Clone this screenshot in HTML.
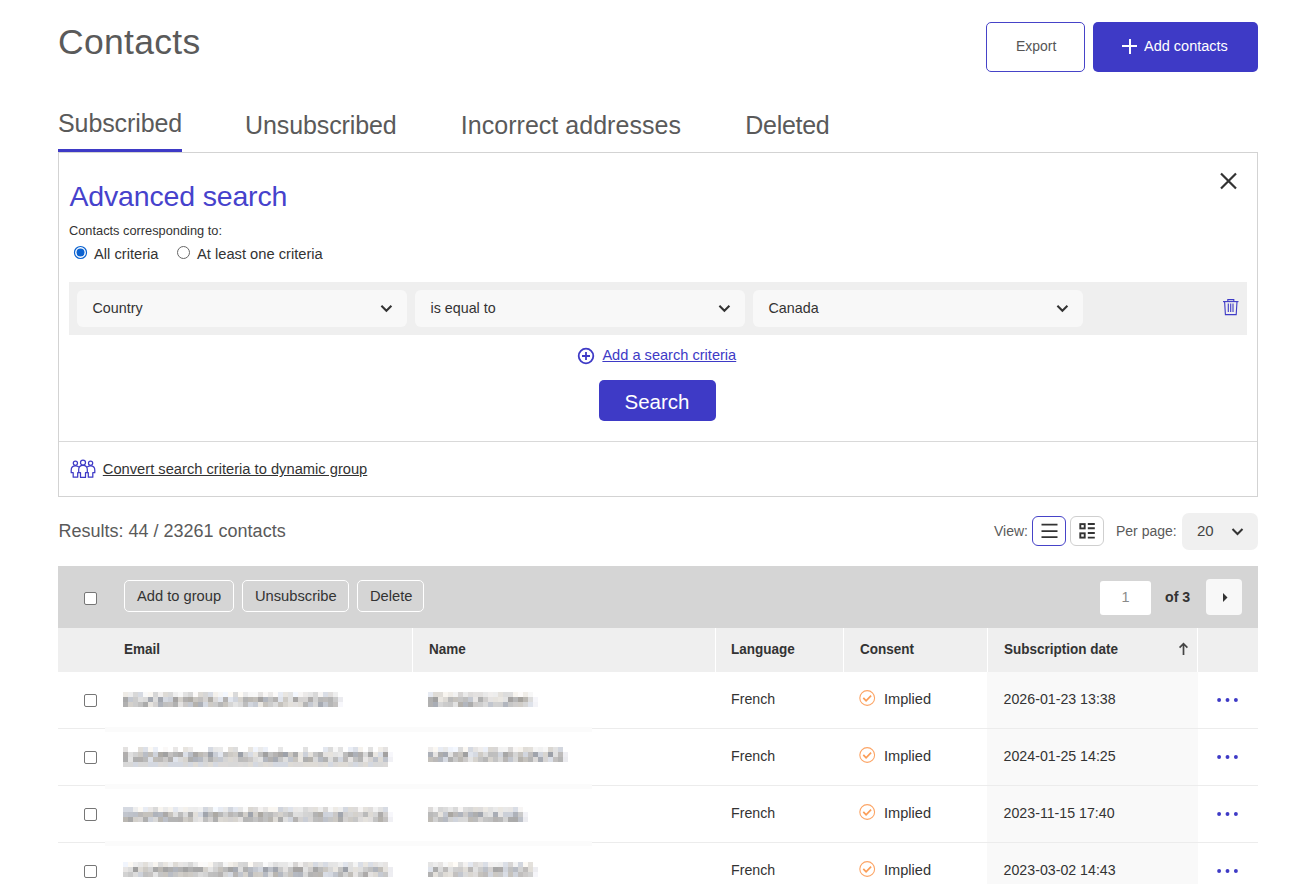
<!DOCTYPE html>
<html><head><meta charset="utf-8"><style>
html,body{margin:0;padding:0;background:#fff;width:1306px;height:884px;overflow:hidden;position:relative}
body{font-family:"Liberation Sans",sans-serif}
.t{position:absolute;white-space:nowrap;line-height:1}
.r{position:absolute}
svg.r{overflow:visible}
</style></head><body>
<div class="t" style="left:58px;top:24.60px;font-size:35.5px;color:#5a5a5a;font-weight:400;letter-spacing:0.3px;">Contacts</div>
<div class="r" style="left:986px;top:22px;width:99px;height:50px;box-sizing:border-box;border:1px solid #4643c8;border-radius:5px;background:#fff"></div>
<div class="t" style="left:1016px;top:38.21px;font-size:15px;color:#555;font-weight:400;letter-spacing:0px;transform:scaleX(0.93);transform-origin:0 0">Export</div>
<div class="r" style="left:1093px;top:22px;width:165px;height:50px;background:#3e3ac6;border-radius:5px"></div>
<div class="r" style="left:1122px;top:45px;width:15px;height:2px;background:#fff"></div>
<div class="r" style="left:1128.5px;top:38.5px;width:2px;height:15px;background:#fff"></div>
<div class="t" style="left:1144px;top:38.21px;font-size:15.2px;color:#fff;font-weight:400;letter-spacing:0px;transform:scaleX(0.955);transform-origin:0 0">Add contacts</div>
<div class="t" style="left:58px;top:111.21px;font-size:25px;color:#5a5a5a;font-weight:400;letter-spacing:-0.1px;">Subscribed</div>
<div class="r" style="left:58px;top:149px;width:124px;height:3px;background:#3e3ac6"></div>
<div class="t" style="left:245px;top:113.01px;font-size:25px;color:#5a5a5a;font-weight:400;letter-spacing:-0.1px;">Unsubscribed</div>
<div class="t" style="left:460.8px;top:113.01px;font-size:25px;color:#5a5a5a;font-weight:400;letter-spacing:0.03px;">Incorrect addresses</div>
<div class="t" style="left:745.3px;top:113.01px;font-size:25px;color:#5a5a5a;font-weight:400;letter-spacing:-0.3px;">Deleted</div>
<div class="r" style="left:58px;top:152px;width:1200px;height:345px;box-sizing:border-box;border:1px solid #d3d3d3"></div>
<div class="t" style="left:69.5px;top:182.30px;font-size:28.5px;color:#4642cc;font-weight:400;letter-spacing:-0.17px;">Advanced search</div>
<svg class="r" style="left:1219px;top:172px" width="19" height="18" viewBox="0 0 19 18"><path d="M2 1.5 L17 16.5 M17 1.5 L2 16.5" stroke="#333" stroke-width="2.2"/></svg>
<div class="t" style="left:69px;top:224.81px;font-size:12.8px;color:#333;font-weight:400;letter-spacing:0px;">Contacts corresponding to:</div>
<svg class="r" style="left:73px;top:245px" width="15" height="15" viewBox="0 0 15 15"><circle cx="7.5" cy="7.5" r="6" fill="#fff" stroke="#0b62d0" stroke-width="1.2"/><circle cx="7.5" cy="7.5" r="4" fill="#0b62d0"/></svg>
<div class="t" style="left:94px;top:247.40px;font-size:14.7px;color:#333;font-weight:400;letter-spacing:0px;">All criteria</div>
<svg class="r" style="left:176px;top:245px" width="15" height="15" viewBox="0 0 15 15"><circle cx="7.5" cy="7.5" r="6" fill="#fff" stroke="#666" stroke-width="1"/></svg>
<div class="t" style="left:197px;top:247.40px;font-size:14.7px;color:#333;font-weight:400;letter-spacing:0px;">At least one criteria</div>
<div class="r" style="left:69px;top:282px;width:1178px;height:53px;background:#efefef"></div>
<div class="r" style="left:77px;top:290px;width:330px;height:37px;background:#f8f8f8;border-radius:6px"></div>
<div class="t" style="left:92.5px;top:300.81px;font-size:14.3px;color:#333;font-weight:400;letter-spacing:0px;">Country</div>
<svg class="r" style="left:380px;top:303px" width="13" height="10" viewBox="0 0 13 10"><path d="M1.4 2.8 L6.4 7.7 L11.4 2.8" fill="none" stroke="#333" stroke-width="2.1"/></svg>
<div class="r" style="left:415px;top:290px;width:330px;height:37px;background:#f8f8f8;border-radius:6px"></div>
<div class="t" style="left:430.5px;top:300.81px;font-size:14.3px;color:#333;font-weight:400;letter-spacing:0px;">is equal to</div>
<svg class="r" style="left:718px;top:303px" width="13" height="10" viewBox="0 0 13 10"><path d="M1.4 2.8 L6.4 7.7 L11.4 2.8" fill="none" stroke="#333" stroke-width="2.1"/></svg>
<div class="r" style="left:753px;top:290px;width:330px;height:37px;background:#f8f8f8;border-radius:6px"></div>
<div class="t" style="left:768.5px;top:300.81px;font-size:14.3px;color:#333;font-weight:400;letter-spacing:0px;">Canada</div>
<svg class="r" style="left:1056px;top:303px" width="13" height="10" viewBox="0 0 13 10"><path d="M1.4 2.8 L6.4 7.7 L11.4 2.8" fill="none" stroke="#333" stroke-width="2.1"/></svg>
<svg class="r" style="left:1222px;top:298px" width="18" height="19" viewBox="0 0 18 19"><g fill="none" stroke="#3e3ac6" stroke-width="1.1"><path d="M1 3.6 H16.5"/><path d="M5.8 3.4 V1.6 H11.8 V3.4"/><path d="M2.6 3.6 L3.4 16.6 H14.2 L15 3.6"/><path d="M6.3 5.5 V14 M8.7 5.5 V14 M11 5.5 V14"/></g></svg>
<svg class="r" style="left:577px;top:347px" width="18" height="18" viewBox="0 0 18 18"><circle cx="9" cy="9" r="7.3" fill="none" stroke="#3e3ac6" stroke-width="1.8"/><path d="M9 5 V13 M5 9 H13" stroke="#3e3ac6" stroke-width="1.8"/></svg>
<div class="t" style="left:602.4px;top:347.90px;font-size:14.6px;color:#3e3ac6;font-weight:400;letter-spacing:0px;text-decoration:underline">Add a search criteria</div>
<div class="r" style="left:599px;top:380px;width:117px;height:41px;background:#3e3ac6;border-radius:5px"></div>
<div class="t" style="left:624.5px;top:392.31px;font-size:20.5px;color:#fff;font-weight:400;letter-spacing:0px;">Search</div>
<div class="r" style="left:59px;top:441px;width:1198px;height:1px;background:#d9d9d9"></div>
<svg class="r" style="left:70px;top:459px" width="26" height="20" viewBox="0 0 26 20"><g fill="none" stroke="#3e3ac6" stroke-width="1.25" stroke-linejoin="round"><circle cx="5.4" cy="4.2" r="2.1"/><circle cx="13" cy="3.6" r="2.5"/><circle cx="20.6" cy="4.2" r="2.1"/><path d="M8.7 13.7 V10.6 Q8.7 6.4 13 6.4 Q17.3 6.4 17.3 10.6 V13.7 H15.5 V18.4 H10.5 V13.7 Z"/><path d="M8.8 7.9 Q7.4 6.9 5.4 6.9 Q1.2 6.9 1.2 11.2 V13.7 H3.2 V18.2 H7.7 V13.7 H8.7"/><path d="M17.2 7.9 Q18.6 6.9 20.6 6.9 Q24.8 6.9 24.8 11.2 V13.7 H22.8 V18.2 H18.3 V13.7 H17.3"/></g></svg>
<div class="t" style="left:102.8px;top:462.21px;font-size:14.7px;color:#333;font-weight:400;letter-spacing:0px;text-decoration:underline">Convert search criteria to dynamic group</div>
<div class="t" style="left:58.5px;top:522.01px;font-size:18px;color:#5a5a5a;font-weight:400;letter-spacing:0px;">Results: 44 / 23261 contacts</div>
<div class="t" style="left:994px;top:524.11px;font-size:14px;color:#5a5a5a;font-weight:400;letter-spacing:0px;">View:</div>
<div class="r" style="left:1032px;top:516px;width:34px;height:30px;box-sizing:border-box;border:1.5px solid #4643c8;border-radius:6px;background:#fff"></div>
<svg class="r" style="left:1039px;top:522px" width="20" height="18" viewBox="0 0 20 18"><path d="M2.5 2.7 H18.5 M2.5 9.2 H18.5 M2.5 15.2 H18.5" stroke="#333" stroke-width="1.8"/></svg>
<div class="r" style="left:1070px;top:516px;width:34px;height:30px;box-sizing:border-box;border:1px solid #cfcfcf;border-radius:6px;background:#fff"></div>
<svg class="r" style="left:1078px;top:522px" width="18" height="18" viewBox="0 0 18 18"><g fill="none" stroke="#333" stroke-width="1.9"><rect x="2.3" y="2.1" width="4.4" height="4.3"/><rect x="2.3" y="11.3" width="4.4" height="4.3"/></g><path d="M9.8 2 H16.8 M9.8 6.3 H16.8 M9.8 11 H16.8 M9.8 15.6 H16.8" stroke="#333" stroke-width="1.9"/></svg>
<div class="t" style="left:1116px;top:524.11px;font-size:14px;color:#5a5a5a;font-weight:400;letter-spacing:0px;">Per page:</div>
<div class="r" style="left:1182px;top:513px;width:76px;height:37px;background:#f0f0f0;border-radius:7px"></div>
<div class="t" style="left:1197px;top:523.10px;font-size:15px;color:#444;font-weight:400;letter-spacing:0px;">20</div>
<svg class="r" style="left:1231px;top:527px" width="13" height="10" viewBox="0 0 13 10"><path d="M1.5 2 L6.5 7 L11.5 2" fill="none" stroke="#333" stroke-width="2"/></svg>
<div class="r" style="left:58px;top:566px;width:1200px;height:62px;background:#d5d5d5"></div>
<div class="r" style="left:84px;top:592px;width:13px;height:13px;box-sizing:border-box;border:1px solid #767676;border-radius:2px;background:#fff"></div>
<div class="r" style="left:124px;top:580px;width:110px;height:32px;box-sizing:border-box;border:1px solid #fff;border-radius:5px"></div>
<div class="t" style="left:137px;top:588.91px;font-size:14.7px;color:#333;font-weight:400;letter-spacing:0px;">Add to group</div>
<div class="r" style="left:242px;top:580px;width:107px;height:32px;box-sizing:border-box;border:1px solid #fff;border-radius:5px"></div>
<div class="t" style="left:255px;top:588.91px;font-size:14.7px;color:#333;font-weight:400;letter-spacing:0px;">Unsubscribe</div>
<div class="r" style="left:357px;top:580px;width:67px;height:32px;box-sizing:border-box;border:1px solid #fff;border-radius:5px"></div>
<div class="t" style="left:370px;top:588.91px;font-size:14.7px;color:#333;font-weight:400;letter-spacing:0px;">Delete</div>
<div class="r" style="left:1100px;top:581px;width:51px;height:34px;background:#fff;border-radius:3px"></div>
<div class="t" style="left:1121.5px;top:589.61px;font-size:14.5px;color:#8a8a8a;font-weight:400;letter-spacing:0px;">1</div>
<div class="t" style="left:1165px;top:589.61px;font-size:14.2px;color:#333;font-weight:700;letter-spacing:0px;">of 3</div>
<div class="r" style="left:1206px;top:579px;width:36px;height:36px;background:#f8f8f8;border-radius:4px"></div>
<svg class="r" style="left:1222px;top:592px" width="7" height="12" viewBox="0 0 7 12"><path d="M1 1 L5.5 5.5 L1 10 Z" fill="#333"/></svg>
<div class="r" style="left:58px;top:628px;width:1200px;height:44px;background:#efefef"></div>
<div class="r" style="left:412px;top:628px;width:1px;height:44px;background:#fff"></div>
<div class="r" style="left:715px;top:628px;width:1px;height:44px;background:#fff"></div>
<div class="r" style="left:843px;top:628px;width:1px;height:44px;background:#fff"></div>
<div class="r" style="left:987px;top:628px;width:1px;height:44px;background:#fff"></div>
<div class="r" style="left:1197px;top:628px;width:1px;height:44px;background:#fff"></div>
<div class="t" style="left:123.5px;top:641.40px;font-size:15px;color:#333;font-weight:700;letter-spacing:0px;transform:scaleX(0.9);transform-origin:0 0">Email</div>
<div class="t" style="left:429px;top:641.40px;font-size:15px;color:#333;font-weight:700;letter-spacing:0px;transform:scaleX(0.9);transform-origin:0 0">Name</div>
<div class="t" style="left:731px;top:641.40px;font-size:15px;color:#333;font-weight:700;letter-spacing:0px;transform:scaleX(0.9);transform-origin:0 0">Language</div>
<div class="t" style="left:860px;top:641.40px;font-size:15px;color:#333;font-weight:700;letter-spacing:0px;transform:scaleX(0.9);transform-origin:0 0">Consent</div>
<div class="t" style="left:1004px;top:641.40px;font-size:15px;color:#333;font-weight:700;letter-spacing:0px;transform:scaleX(0.9);transform-origin:0 0">Subscription date</div>
<svg class="r" style="left:1178px;top:642px" width="11" height="14" viewBox="0 0 11 14"><path d="M5.5 13 V2 M1.6 5.6 L5.5 1.7 L9.4 5.6" fill="none" stroke="#444" stroke-width="1.7"/></svg>
<div class="r" style="left:987px;top:672px;width:211px;height:56px;background:#f9f9f9"></div>
<div class="r" style="left:58px;top:728px;width:47px;height:1px;background:#ececec"></div>
<div class="r" style="left:105px;top:727px;width:487px;height:5px;background:#fbfbfb"></div>
<div class="r" style="left:592px;top:728px;width:666px;height:1px;background:#ececec"></div>
<div class="r" style="left:84px;top:694px;width:13px;height:13px;box-sizing:border-box;border:1px solid #767676;border-radius:2px;background:#fff"></div>
<svg class="r" style="left:122.5px;top:692px" width="225" height="15"><rect x="0" y="0" width="5" height="5" fill="rgb(238, 235, 230)"/><rect x="5" y="0" width="5" height="5" fill="rgb(237, 237, 237)"/><rect x="10" y="0" width="5" height="5" fill="rgb(216, 216, 216)"/><rect x="15" y="0" width="5" height="5" fill="rgb(214, 218, 226)"/><rect x="20" y="0" width="5" height="5" fill="rgb(249, 249, 249)"/><rect x="25" y="0" width="5" height="5" fill="rgb(250, 247, 242)"/><rect x="30" y="0" width="5" height="5" fill="rgb(214, 214, 214)"/><rect x="35" y="0" width="5" height="5" fill="rgb(242, 240, 239)"/><rect x="40" y="0" width="5" height="5" fill="rgb(222, 219, 214)"/><rect x="45" y="0" width="5" height="5" fill="rgb(217, 217, 217)"/><rect x="50" y="0" width="5" height="5" fill="rgb(239, 239, 239)"/><rect x="55" y="0" width="5" height="5" fill="rgb(248, 248, 248)"/><rect x="60" y="0" width="5" height="5" fill="rgb(226, 226, 226)"/><rect x="65" y="0" width="5" height="5" fill="rgb(215, 215, 215)"/><rect x="70" y="0" width="5" height="5" fill="rgb(252, 250, 249)"/><rect x="75" y="0" width="5" height="5" fill="rgb(221, 218, 213)"/><rect x="80" y="0" width="5" height="5" fill="rgb(214, 214, 214)"/><rect x="85" y="0" width="5" height="5" fill="rgb(216, 220, 228)"/><rect x="90" y="0" width="5" height="5" fill="rgb(244, 241, 236)"/><rect x="95" y="0" width="5" height="5" fill="rgb(246, 246, 246)"/><rect x="100" y="0" width="5" height="5" fill="rgb(244, 248, 255)"/><rect x="105" y="0" width="5" height="5" fill="rgb(253, 250, 245)"/><rect x="110" y="0" width="5" height="5" fill="rgb(218, 218, 218)"/><rect x="115" y="0" width="5" height="5" fill="rgb(254, 251, 246)"/><rect x="120" y="0" width="5" height="5" fill="rgb(235, 235, 235)"/><rect x="125" y="0" width="5" height="5" fill="rgb(247, 247, 247)"/><rect x="130" y="0" width="5" height="5" fill="rgb(248, 248, 248)"/><rect x="135" y="0" width="5" height="5" fill="rgb(228, 226, 225)"/><rect x="140" y="0" width="5" height="5" fill="rgb(249, 247, 246)"/><rect x="145" y="0" width="5" height="5" fill="rgb(235, 233, 232)"/><rect x="150" y="0" width="5" height="5" fill="rgb(252, 250, 249)"/><rect x="155" y="0" width="5" height="5" fill="rgb(231, 235, 243)"/><rect x="160" y="0" width="5" height="5" fill="rgb(233, 230, 225)"/><rect x="165" y="0" width="5" height="5" fill="rgb(227, 227, 227)"/><rect x="170" y="0" width="5" height="5" fill="rgb(244, 248, 255)"/><rect x="175" y="0" width="5" height="5" fill="rgb(248, 246, 245)"/><rect x="180" y="0" width="5" height="5" fill="rgb(236, 234, 233)"/><rect x="185" y="0" width="5" height="5" fill="rgb(230, 230, 230)"/><rect x="190" y="0" width="5" height="5" fill="rgb(216, 216, 216)"/><rect x="195" y="0" width="5" height="5" fill="rgb(247, 245, 244)"/><rect x="200" y="0" width="5" height="5" fill="rgb(218, 222, 230)"/><rect x="205" y="0" width="5" height="5" fill="rgb(224, 222, 221)"/><rect x="210" y="0" width="5" height="5" fill="rgb(238, 238, 238)"/><rect x="0" y="5" width="5" height="5" fill="rgb(169, 169, 169)"/><rect x="5" y="5" width="5" height="5" fill="rgb(196, 200, 208)"/><rect x="10" y="5" width="5" height="5" fill="rgb(204, 204, 204)"/><rect x="15" y="5" width="5" height="5" fill="rgb(223, 223, 223)"/><rect x="20" y="5" width="5" height="5" fill="rgb(218, 218, 218)"/><rect x="25" y="5" width="5" height="5" fill="rgb(167, 171, 179)"/><rect x="30" y="5" width="5" height="5" fill="rgb(220, 220, 220)"/><rect x="35" y="5" width="5" height="5" fill="rgb(163, 167, 175)"/><rect x="40" y="5" width="5" height="5" fill="rgb(213, 217, 225)"/><rect x="45" y="5" width="5" height="5" fill="rgb(205, 209, 217)"/><rect x="50" y="5" width="5" height="5" fill="rgb(165, 163, 162)"/><rect x="55" y="5" width="5" height="5" fill="rgb(211, 208, 203)"/><rect x="60" y="5" width="5" height="5" fill="rgb(177, 175, 174)"/><rect x="65" y="5" width="5" height="5" fill="rgb(173, 170, 165)"/><rect x="70" y="5" width="5" height="5" fill="rgb(202, 199, 194)"/><rect x="75" y="5" width="5" height="5" fill="rgb(194, 192, 191)"/><rect x="80" y="5" width="5" height="5" fill="rgb(213, 211, 210)"/><rect x="85" y="5" width="5" height="5" fill="rgb(176, 173, 168)"/><rect x="90" y="5" width="5" height="5" fill="rgb(220, 218, 217)"/><rect x="95" y="5" width="5" height="5" fill="rgb(226, 230, 238)"/><rect x="100" y="5" width="5" height="5" fill="rgb(180, 178, 177)"/><rect x="105" y="5" width="5" height="5" fill="rgb(226, 230, 238)"/><rect x="110" y="5" width="5" height="5" fill="rgb(209, 213, 221)"/><rect x="115" y="5" width="5" height="5" fill="rgb(214, 211, 206)"/><rect x="120" y="5" width="5" height="5" fill="rgb(179, 179, 179)"/><rect x="125" y="5" width="5" height="5" fill="rgb(188, 185, 180)"/><rect x="130" y="5" width="5" height="5" fill="rgb(195, 192, 187)"/><rect x="135" y="5" width="5" height="5" fill="rgb(164, 162, 161)"/><rect x="140" y="5" width="5" height="5" fill="rgb(179, 183, 191)"/><rect x="145" y="5" width="5" height="5" fill="rgb(196, 196, 196)"/><rect x="150" y="5" width="5" height="5" fill="rgb(181, 179, 178)"/><rect x="155" y="5" width="5" height="5" fill="rgb(224, 228, 236)"/><rect x="160" y="5" width="5" height="5" fill="rgb(206, 203, 198)"/><rect x="165" y="5" width="5" height="5" fill="rgb(225, 225, 225)"/><rect x="170" y="5" width="5" height="5" fill="rgb(169, 167, 166)"/><rect x="175" y="5" width="5" height="5" fill="rgb(213, 211, 210)"/><rect x="180" y="5" width="5" height="5" fill="rgb(214, 212, 211)"/><rect x="185" y="5" width="5" height="5" fill="rgb(176, 174, 173)"/><rect x="190" y="5" width="5" height="5" fill="rgb(211, 211, 211)"/><rect x="195" y="5" width="5" height="5" fill="rgb(184, 184, 184)"/><rect x="200" y="5" width="5" height="5" fill="rgb(189, 187, 186)"/><rect x="205" y="5" width="5" height="5" fill="rgb(180, 180, 180)"/><rect x="210" y="5" width="5" height="5" fill="rgb(203, 203, 203)"/><rect x="215" y="5" width="5" height="5" fill="rgb(235,235,239)"/><rect x="0" y="10" width="5" height="5" fill="rgb(176, 176, 176)"/><rect x="5" y="10" width="5" height="5" fill="rgb(212, 209, 204)"/><rect x="10" y="10" width="5" height="5" fill="rgb(204, 204, 204)"/><rect x="15" y="10" width="5" height="5" fill="rgb(193, 193, 193)"/><rect x="20" y="10" width="5" height="5" fill="rgb(171, 171, 171)"/><rect x="25" y="10" width="5" height="5" fill="rgb(231, 228, 223)"/><rect x="30" y="10" width="5" height="5" fill="rgb(212, 210, 209)"/><rect x="35" y="10" width="5" height="5" fill="rgb(175, 179, 187)"/><rect x="40" y="10" width="5" height="5" fill="rgb(192, 192, 192)"/><rect x="45" y="10" width="5" height="5" fill="rgb(196, 194, 193)"/><rect x="50" y="10" width="5" height="5" fill="rgb(177, 177, 177)"/><rect x="55" y="10" width="5" height="5" fill="rgb(227, 225, 224)"/><rect x="60" y="10" width="5" height="5" fill="rgb(202, 200, 199)"/><rect x="65" y="10" width="5" height="5" fill="rgb(196, 200, 208)"/><rect x="70" y="10" width="5" height="5" fill="rgb(181, 178, 173)"/><rect x="75" y="10" width="5" height="5" fill="rgb(172, 176, 184)"/><rect x="80" y="10" width="5" height="5" fill="rgb(213, 217, 225)"/><rect x="85" y="10" width="5" height="5" fill="rgb(206, 203, 198)"/><rect x="90" y="10" width="5" height="5" fill="rgb(203, 203, 203)"/><rect x="95" y="10" width="5" height="5" fill="rgb(183, 183, 183)"/><rect x="100" y="10" width="5" height="5" fill="rgb(199, 196, 191)"/><rect x="105" y="10" width="5" height="5" fill="rgb(214, 214, 214)"/><rect x="110" y="10" width="5" height="5" fill="rgb(228, 228, 228)"/><rect x="115" y="10" width="5" height="5" fill="rgb(218, 218, 218)"/><rect x="120" y="10" width="5" height="5" fill="rgb(189, 189, 189)"/><rect x="125" y="10" width="5" height="5" fill="rgb(210, 214, 222)"/><rect x="130" y="10" width="5" height="5" fill="rgb(199, 203, 211)"/><rect x="135" y="10" width="5" height="5" fill="rgb(234, 231, 226)"/><rect x="140" y="10" width="5" height="5" fill="rgb(198, 195, 190)"/><rect x="145" y="10" width="5" height="5" fill="rgb(204, 204, 204)"/><rect x="150" y="10" width="5" height="5" fill="rgb(219, 219, 219)"/><rect x="155" y="10" width="5" height="5" fill="rgb(197, 194, 189)"/><rect x="160" y="10" width="5" height="5" fill="rgb(215, 212, 207)"/><rect x="165" y="10" width="5" height="5" fill="rgb(227, 224, 219)"/><rect x="170" y="10" width="5" height="5" fill="rgb(225, 223, 222)"/><rect x="175" y="10" width="5" height="5" fill="rgb(223, 220, 215)"/><rect x="180" y="10" width="5" height="5" fill="rgb(182, 182, 182)"/><rect x="185" y="10" width="5" height="5" fill="rgb(197, 201, 209)"/><rect x="190" y="10" width="5" height="5" fill="rgb(216, 216, 216)"/><rect x="195" y="10" width="5" height="5" fill="rgb(167, 171, 179)"/><rect x="200" y="10" width="5" height="5" fill="rgb(196, 200, 208)"/><rect x="205" y="10" width="5" height="5" fill="rgb(182, 182, 182)"/><rect x="210" y="10" width="5" height="5" fill="rgb(195, 193, 192)"/><rect x="215" y="10" width="5" height="5" fill="rgb(247,247,251)"/></svg>
<svg class="r" style="left:428px;top:692px" width="115" height="15"><rect x="0" y="0" width="5" height="5" fill="rgb(230, 234, 242)"/><rect x="5" y="0" width="5" height="5" fill="rgb(223, 220, 215)"/><rect x="10" y="0" width="5" height="5" fill="rgb(224, 221, 216)"/><rect x="15" y="0" width="5" height="5" fill="rgb(248, 245, 240)"/><rect x="20" y="0" width="5" height="5" fill="rgb(239, 236, 231)"/><rect x="25" y="0" width="5" height="5" fill="rgb(242, 242, 242)"/><rect x="30" y="0" width="5" height="5" fill="rgb(215, 213, 212)"/><rect x="35" y="0" width="5" height="5" fill="rgb(234, 234, 234)"/><rect x="40" y="0" width="5" height="5" fill="rgb(222, 220, 219)"/><rect x="45" y="0" width="5" height="5" fill="rgb(227, 225, 224)"/><rect x="50" y="0" width="5" height="5" fill="rgb(226, 224, 223)"/><rect x="55" y="0" width="5" height="5" fill="rgb(233, 233, 233)"/><rect x="60" y="0" width="5" height="5" fill="rgb(240, 238, 237)"/><rect x="65" y="0" width="5" height="5" fill="rgb(237, 237, 237)"/><rect x="70" y="0" width="5" height="5" fill="rgb(228, 225, 220)"/><rect x="75" y="0" width="5" height="5" fill="rgb(220, 220, 220)"/><rect x="80" y="0" width="5" height="5" fill="rgb(221, 221, 221)"/><rect x="85" y="0" width="5" height="5" fill="rgb(247, 244, 239)"/><rect x="90" y="0" width="5" height="5" fill="rgb(253, 251, 250)"/><rect x="95" y="0" width="5" height="5" fill="rgb(240, 237, 232)"/><rect x="100" y="0" width="5" height="5" fill="rgb(247, 247, 247)"/><rect x="0" y="5" width="5" height="5" fill="rgb(176, 176, 176)"/><rect x="5" y="5" width="5" height="5" fill="rgb(161, 161, 161)"/><rect x="10" y="5" width="5" height="5" fill="rgb(233, 230, 225)"/><rect x="15" y="5" width="5" height="5" fill="rgb(221, 218, 213)"/><rect x="20" y="5" width="5" height="5" fill="rgb(187, 187, 187)"/><rect x="25" y="5" width="5" height="5" fill="rgb(198, 195, 190)"/><rect x="30" y="5" width="5" height="5" fill="rgb(197, 197, 197)"/><rect x="35" y="5" width="5" height="5" fill="rgb(190, 190, 190)"/><rect x="40" y="5" width="5" height="5" fill="rgb(197, 201, 209)"/><rect x="45" y="5" width="5" height="5" fill="rgb(232, 230, 229)"/><rect x="50" y="5" width="5" height="5" fill="rgb(176, 176, 176)"/><rect x="55" y="5" width="5" height="5" fill="rgb(208, 206, 205)"/><rect x="60" y="5" width="5" height="5" fill="rgb(229, 227, 226)"/><rect x="65" y="5" width="5" height="5" fill="rgb(230, 227, 222)"/><rect x="70" y="5" width="5" height="5" fill="rgb(234, 231, 226)"/><rect x="75" y="5" width="5" height="5" fill="rgb(227, 227, 227)"/><rect x="80" y="5" width="5" height="5" fill="rgb(165, 163, 162)"/><rect x="85" y="5" width="5" height="5" fill="rgb(183, 183, 183)"/><rect x="90" y="5" width="5" height="5" fill="rgb(166, 163, 158)"/><rect x="95" y="5" width="5" height="5" fill="rgb(188, 185, 180)"/><rect x="100" y="5" width="5" height="5" fill="rgb(220, 220, 220)"/><rect x="105" y="5" width="5" height="5" fill="rgb(246,246,250)"/><rect x="0" y="10" width="5" height="5" fill="rgb(177, 177, 177)"/><rect x="5" y="10" width="5" height="5" fill="rgb(169, 173, 181)"/><rect x="10" y="10" width="5" height="5" fill="rgb(213, 213, 213)"/><rect x="15" y="10" width="5" height="5" fill="rgb(203, 203, 203)"/><rect x="20" y="10" width="5" height="5" fill="rgb(200, 200, 200)"/><rect x="25" y="10" width="5" height="5" fill="rgb(226, 226, 226)"/><rect x="30" y="10" width="5" height="5" fill="rgb(179, 176, 171)"/><rect x="35" y="10" width="5" height="5" fill="rgb(178, 182, 190)"/><rect x="40" y="10" width="5" height="5" fill="rgb(172, 172, 172)"/><rect x="45" y="10" width="5" height="5" fill="rgb(205, 203, 202)"/><rect x="50" y="10" width="5" height="5" fill="rgb(205, 205, 205)"/><rect x="55" y="10" width="5" height="5" fill="rgb(218, 218, 218)"/><rect x="60" y="10" width="5" height="5" fill="rgb(194, 198, 206)"/><rect x="65" y="10" width="5" height="5" fill="rgb(209, 209, 209)"/><rect x="70" y="10" width="5" height="5" fill="rgb(208, 208, 208)"/><rect x="75" y="10" width="5" height="5" fill="rgb(178, 182, 190)"/><rect x="80" y="10" width="5" height="5" fill="rgb(198, 198, 198)"/><rect x="85" y="10" width="5" height="5" fill="rgb(207, 205, 204)"/><rect x="90" y="10" width="5" height="5" fill="rgb(208, 205, 200)"/><rect x="95" y="10" width="5" height="5" fill="rgb(214, 214, 214)"/><rect x="100" y="10" width="5" height="5" fill="rgb(222, 226, 234)"/><rect x="105" y="10" width="5" height="5" fill="rgb(243,243,247)"/></svg>
<div class="t" style="left:731px;top:692.01px;font-size:14.2px;color:#333;font-weight:400;letter-spacing:0px;">French</div>
<svg class="r" style="left:858px;top:689px" width="18" height="18" viewBox="0 0 18 18"><circle cx="9.2" cy="9" r="7.4" fill="none" stroke="#fca566" stroke-width="1.1"/><path d="M5.3 8.8 L8.1 11.8 L13.1 6.7" fill="none" stroke="#fb9d57" stroke-width="1.7"/></svg>
<div class="t" style="left:884px;top:692.01px;font-size:14.6px;color:#333;font-weight:400;letter-spacing:0px;">Implied</div>
<div class="t" style="left:1003.6px;top:692.01px;font-size:14.2px;color:#333;font-weight:400;letter-spacing:0px;">2026-01-23 13:38</div>
<svg class="r" style="left:1216px;top:697px" width="24" height="6" viewBox="0 0 24 6"><circle cx="3.1" cy="3" r="1.95" fill="#3e3ac6"/><circle cx="11.5" cy="3" r="1.95" fill="#3e3ac6"/><circle cx="19.9" cy="3" r="1.95" fill="#3e3ac6"/></svg>
<div class="r" style="left:987px;top:729px;width:211px;height:56px;background:#f9f9f9"></div>
<div class="r" style="left:58px;top:785px;width:47px;height:1px;background:#ececec"></div>
<div class="r" style="left:105px;top:784px;width:487px;height:5px;background:#fbfbfb"></div>
<div class="r" style="left:592px;top:785px;width:666px;height:1px;background:#ececec"></div>
<div class="r" style="left:84px;top:751px;width:13px;height:13px;box-sizing:border-box;border:1px solid #767676;border-radius:2px;background:#fff"></div>
<svg class="r" style="left:123px;top:747px" width="275" height="20"><rect x="0" y="0" width="5" height="5" fill="rgb(227, 225, 224)"/><rect x="15" y="0" width="5" height="5" fill="rgb(226, 223, 218)"/><rect x="20" y="0" width="5" height="5" fill="rgb(220, 224, 232)"/><rect x="25" y="0" width="5" height="5" fill="rgb(252, 249, 244)"/><rect x="30" y="0" width="5" height="5" fill="rgb(234, 238, 246)"/><rect x="40" y="0" width="5" height="5" fill="rgb(251, 249, 248)"/><rect x="50" y="0" width="5" height="5" fill="rgb(233, 231, 230)"/><rect x="60" y="0" width="5" height="5" fill="rgb(231, 228, 223)"/><rect x="65" y="0" width="5" height="5" fill="rgb(237, 235, 234)"/><rect x="85" y="0" width="5" height="5" fill="rgb(214, 218, 226)"/><rect x="90" y="0" width="5" height="5" fill="rgb(232, 232, 232)"/><rect x="95" y="0" width="5" height="5" fill="rgb(234, 234, 234)"/><rect x="105" y="0" width="5" height="5" fill="rgb(227, 224, 219)"/><rect x="110" y="0" width="5" height="5" fill="rgb(221, 221, 221)"/><rect x="125" y="0" width="5" height="5" fill="rgb(232, 229, 224)"/><rect x="130" y="0" width="5" height="5" fill="rgb(241, 245, 253)"/><rect x="135" y="0" width="5" height="5" fill="rgb(235, 235, 235)"/><rect x="140" y="0" width="5" height="5" fill="rgb(236, 240, 248)"/><rect x="155" y="0" width="5" height="5" fill="rgb(231, 231, 231)"/><rect x="180" y="0" width="5" height="5" fill="rgb(225, 225, 225)"/><rect x="200" y="0" width="5" height="5" fill="rgb(227, 231, 239)"/><rect x="205" y="0" width="5" height="5" fill="rgb(219, 219, 219)"/><rect x="210" y="0" width="5" height="5" fill="rgb(248, 248, 248)"/><rect x="215" y="0" width="5" height="5" fill="rgb(226, 226, 226)"/><rect x="225" y="0" width="5" height="5" fill="rgb(234, 238, 246)"/><rect x="230" y="0" width="5" height="5" fill="rgb(220, 224, 232)"/><rect x="235" y="0" width="5" height="5" fill="rgb(245, 242, 237)"/><rect x="245" y="0" width="5" height="5" fill="rgb(226, 226, 226)"/><rect x="255" y="0" width="5" height="5" fill="rgb(241, 238, 233)"/><rect x="260" y="0" width="5" height="5" fill="rgb(228, 226, 225)"/><rect x="0" y="5" width="5" height="5" fill="rgb(176, 174, 173)"/><rect x="5" y="5" width="5" height="5" fill="rgb(223, 223, 223)"/><rect x="10" y="5" width="5" height="5" fill="rgb(210, 210, 210)"/><rect x="15" y="5" width="5" height="5" fill="rgb(205, 202, 197)"/><rect x="20" y="5" width="5" height="5" fill="rgb(185, 189, 197)"/><rect x="25" y="5" width="5" height="5" fill="rgb(191, 188, 183)"/><rect x="30" y="5" width="5" height="5" fill="rgb(207, 211, 219)"/><rect x="35" y="5" width="5" height="5" fill="rgb(172, 169, 164)"/><rect x="40" y="5" width="5" height="5" fill="rgb(161, 161, 161)"/><rect x="45" y="5" width="5" height="5" fill="rgb(195, 193, 192)"/><rect x="50" y="5" width="5" height="5" fill="rgb(180, 180, 180)"/><rect x="55" y="5" width="5" height="5" fill="rgb(173, 171, 170)"/><rect x="60" y="5" width="5" height="5" fill="rgb(220, 224, 232)"/><rect x="65" y="5" width="5" height="5" fill="rgb(187, 191, 199)"/><rect x="70" y="5" width="5" height="5" fill="rgb(168, 166, 165)"/><rect x="75" y="5" width="5" height="5" fill="rgb(189, 186, 181)"/><rect x="80" y="5" width="5" height="5" fill="rgb(197, 195, 194)"/><rect x="85" y="5" width="5" height="5" fill="rgb(156, 160, 168)"/><rect x="90" y="5" width="5" height="5" fill="rgb(202, 206, 214)"/><rect x="95" y="5" width="5" height="5" fill="rgb(226, 230, 238)"/><rect x="100" y="5" width="5" height="5" fill="rgb(191, 191, 191)"/><rect x="105" y="5" width="5" height="5" fill="rgb(205, 202, 197)"/><rect x="110" y="5" width="5" height="5" fill="rgb(211, 208, 203)"/><rect x="115" y="5" width="5" height="5" fill="rgb(156, 160, 168)"/><rect x="120" y="5" width="5" height="5" fill="rgb(208, 208, 208)"/><rect x="125" y="5" width="5" height="5" fill="rgb(216, 220, 228)"/><rect x="130" y="5" width="5" height="5" fill="rgb(230, 227, 222)"/><rect x="135" y="5" width="5" height="5" fill="rgb(191, 191, 191)"/><rect x="140" y="5" width="5" height="5" fill="rgb(160, 160, 160)"/><rect x="145" y="5" width="5" height="5" fill="rgb(193, 193, 193)"/><rect x="150" y="5" width="5" height="5" fill="rgb(181, 179, 178)"/><rect x="155" y="5" width="5" height="5" fill="rgb(168, 166, 165)"/><rect x="160" y="5" width="5" height="5" fill="rgb(158, 162, 170)"/><rect x="165" y="5" width="5" height="5" fill="rgb(204, 201, 196)"/><rect x="170" y="5" width="5" height="5" fill="rgb(170, 170, 170)"/><rect x="175" y="5" width="5" height="5" fill="rgb(233, 230, 225)"/><rect x="180" y="5" width="5" height="5" fill="rgb(205, 209, 217)"/><rect x="185" y="5" width="5" height="5" fill="rgb(229, 226, 221)"/><rect x="190" y="5" width="5" height="5" fill="rgb(196, 196, 196)"/><rect x="195" y="5" width="5" height="5" fill="rgb(178, 178, 178)"/><rect x="200" y="5" width="5" height="5" fill="rgb(228, 226, 225)"/><rect x="205" y="5" width="5" height="5" fill="rgb(230, 227, 222)"/><rect x="210" y="5" width="5" height="5" fill="rgb(227, 227, 227)"/><rect x="215" y="5" width="5" height="5" fill="rgb(232, 232, 232)"/><rect x="220" y="5" width="5" height="5" fill="rgb(189, 189, 189)"/><rect x="225" y="5" width="5" height="5" fill="rgb(163, 163, 163)"/><rect x="230" y="5" width="5" height="5" fill="rgb(173, 177, 185)"/><rect x="235" y="5" width="5" height="5" fill="rgb(176, 174, 173)"/><rect x="240" y="5" width="5" height="5" fill="rgb(217, 217, 217)"/><rect x="245" y="5" width="5" height="5" fill="rgb(166, 166, 166)"/><rect x="250" y="5" width="5" height="5" fill="rgb(234, 231, 226)"/><rect x="255" y="5" width="5" height="5" fill="rgb(218, 222, 230)"/><rect x="260" y="5" width="5" height="5" fill="rgb(163, 161, 160)"/><rect x="265" y="5" width="5" height="5" fill="rgb(247,247,251)"/><rect x="0" y="10" width="5" height="5" fill="rgb(174, 174, 174)"/><rect x="5" y="10" width="5" height="5" fill="rgb(227, 227, 227)"/><rect x="10" y="10" width="5" height="5" fill="rgb(175, 175, 175)"/><rect x="15" y="10" width="5" height="5" fill="rgb(177, 175, 174)"/><rect x="20" y="10" width="5" height="5" fill="rgb(186, 186, 186)"/><rect x="25" y="10" width="5" height="5" fill="rgb(220, 224, 232)"/><rect x="30" y="10" width="5" height="5" fill="rgb(191, 188, 183)"/><rect x="35" y="10" width="5" height="5" fill="rgb(187, 185, 184)"/><rect x="40" y="10" width="5" height="5" fill="rgb(204, 202, 201)"/><rect x="45" y="10" width="5" height="5" fill="rgb(177, 175, 174)"/><rect x="50" y="10" width="5" height="5" fill="rgb(224, 228, 236)"/><rect x="55" y="10" width="5" height="5" fill="rgb(219, 219, 219)"/><rect x="60" y="10" width="5" height="5" fill="rgb(215, 212, 207)"/><rect x="65" y="10" width="5" height="5" fill="rgb(174, 174, 174)"/><rect x="70" y="10" width="5" height="5" fill="rgb(175, 179, 187)"/><rect x="75" y="10" width="5" height="5" fill="rgb(182, 186, 194)"/><rect x="80" y="10" width="5" height="5" fill="rgb(209, 209, 209)"/><rect x="85" y="10" width="5" height="5" fill="rgb(178, 178, 178)"/><rect x="90" y="10" width="5" height="5" fill="rgb(200, 200, 200)"/><rect x="95" y="10" width="5" height="5" fill="rgb(197, 201, 209)"/><rect x="100" y="10" width="5" height="5" fill="rgb(213, 213, 213)"/><rect x="105" y="10" width="5" height="5" fill="rgb(220, 217, 212)"/><rect x="110" y="10" width="5" height="5" fill="rgb(216, 214, 213)"/><rect x="115" y="10" width="5" height="5" fill="rgb(188, 188, 188)"/><rect x="120" y="10" width="5" height="5" fill="rgb(191, 189, 188)"/><rect x="125" y="10" width="5" height="5" fill="rgb(202, 200, 199)"/><rect x="130" y="10" width="5" height="5" fill="rgb(219, 219, 219)"/><rect x="135" y="10" width="5" height="5" fill="rgb(227, 227, 227)"/><rect x="140" y="10" width="5" height="5" fill="rgb(178, 182, 190)"/><rect x="145" y="10" width="5" height="5" fill="rgb(178, 176, 175)"/><rect x="150" y="10" width="5" height="5" fill="rgb(167, 171, 179)"/><rect x="155" y="10" width="5" height="5" fill="rgb(199, 199, 199)"/><rect x="160" y="10" width="5" height="5" fill="rgb(222, 222, 222)"/><rect x="165" y="10" width="5" height="5" fill="rgb(194, 198, 206)"/><rect x="170" y="10" width="5" height="5" fill="rgb(200, 197, 192)"/><rect x="175" y="10" width="5" height="5" fill="rgb(234, 231, 226)"/><rect x="180" y="10" width="5" height="5" fill="rgb(174, 174, 174)"/><rect x="185" y="10" width="5" height="5" fill="rgb(181, 178, 173)"/><rect x="190" y="10" width="5" height="5" fill="rgb(217, 217, 217)"/><rect x="195" y="10" width="5" height="5" fill="rgb(182, 186, 194)"/><rect x="200" y="10" width="5" height="5" fill="rgb(178, 178, 178)"/><rect x="205" y="10" width="5" height="5" fill="rgb(222, 222, 222)"/><rect x="210" y="10" width="5" height="5" fill="rgb(187, 187, 187)"/><rect x="215" y="10" width="5" height="5" fill="rgb(211, 215, 223)"/><rect x="220" y="10" width="5" height="5" fill="rgb(187, 185, 184)"/><rect x="225" y="10" width="5" height="5" fill="rgb(230, 228, 227)"/><rect x="230" y="10" width="5" height="5" fill="rgb(195, 195, 195)"/><rect x="235" y="10" width="5" height="5" fill="rgb(180, 180, 180)"/><rect x="240" y="10" width="5" height="5" fill="rgb(233, 231, 230)"/><rect x="245" y="10" width="5" height="5" fill="rgb(216, 214, 213)"/><rect x="250" y="10" width="5" height="5" fill="rgb(191, 195, 203)"/><rect x="255" y="10" width="5" height="5" fill="rgb(222, 219, 214)"/><rect x="260" y="10" width="5" height="5" fill="rgb(192, 196, 204)"/><rect x="265" y="10" width="5" height="5" fill="rgb(241,241,245)"/><rect x="0" y="15" width="5" height="5" fill="rgb(216, 216, 216)"/><rect x="5" y="15" width="5" height="5" fill="rgb(216, 216, 216)"/><rect x="10" y="15" width="5" height="5" fill="rgb(212, 216, 224)"/><rect x="15" y="15" width="5" height="5" fill="rgb(216, 216, 216)"/><rect x="20" y="15" width="5" height="5" fill="rgb(216, 216, 216)"/><rect x="25" y="15" width="5" height="5" fill="rgb(212, 216, 224)"/><rect x="30" y="15" width="5" height="5" fill="rgb(212, 216, 224)"/><rect x="35" y="15" width="5" height="5" fill="rgb(219, 217, 216)"/><rect x="40" y="15" width="5" height="5" fill="rgb(216, 216, 216)"/><rect x="45" y="15" width="5" height="5" fill="rgb(212, 216, 224)"/><rect x="50" y="15" width="5" height="5" fill="rgb(212, 216, 224)"/><rect x="55" y="15" width="5" height="5" fill="rgb(212, 216, 224)"/><rect x="60" y="15" width="5" height="5" fill="rgb(216, 216, 216)"/><rect x="65" y="15" width="5" height="5" fill="rgb(212, 216, 224)"/><rect x="70" y="15" width="5" height="5" fill="rgb(222, 219, 214)"/><rect x="75" y="15" width="5" height="5" fill="rgb(212, 216, 224)"/><rect x="80" y="15" width="5" height="5" fill="rgb(216, 216, 216)"/><rect x="85" y="15" width="5" height="5" fill="rgb(222, 219, 214)"/><rect x="90" y="15" width="5" height="5" fill="rgb(212, 216, 224)"/><rect x="95" y="15" width="5" height="5" fill="rgb(219, 217, 216)"/><rect x="100" y="15" width="5" height="5" fill="rgb(219, 217, 216)"/><rect x="105" y="15" width="5" height="5" fill="rgb(216, 216, 216)"/><rect x="110" y="15" width="5" height="5" fill="rgb(216, 216, 216)"/><rect x="115" y="15" width="5" height="5" fill="rgb(219, 217, 216)"/><rect x="120" y="15" width="5" height="5" fill="rgb(216, 216, 216)"/><rect x="125" y="15" width="5" height="5" fill="rgb(222, 219, 214)"/><rect x="130" y="15" width="5" height="5" fill="rgb(212, 216, 224)"/><rect x="135" y="15" width="5" height="5" fill="rgb(216, 216, 216)"/><rect x="140" y="15" width="5" height="5" fill="rgb(222, 219, 214)"/><rect x="145" y="15" width="5" height="5" fill="rgb(219, 217, 216)"/><rect x="150" y="15" width="5" height="5" fill="rgb(212, 216, 224)"/><rect x="155" y="15" width="5" height="5" fill="rgb(212, 216, 224)"/><rect x="160" y="15" width="5" height="5" fill="rgb(212, 216, 224)"/><rect x="165" y="15" width="5" height="5" fill="rgb(222, 219, 214)"/><rect x="170" y="15" width="5" height="5" fill="rgb(219, 217, 216)"/><rect x="175" y="15" width="5" height="5" fill="rgb(219, 217, 216)"/><rect x="180" y="15" width="5" height="5" fill="rgb(222, 219, 214)"/><rect x="185" y="15" width="5" height="5" fill="rgb(222, 219, 214)"/><rect x="190" y="15" width="5" height="5" fill="rgb(222, 219, 214)"/><rect x="195" y="15" width="5" height="5" fill="rgb(219, 217, 216)"/><rect x="200" y="15" width="5" height="5" fill="rgb(222, 219, 214)"/><rect x="205" y="15" width="5" height="5" fill="rgb(212, 216, 224)"/><rect x="210" y="15" width="5" height="5" fill="rgb(219, 217, 216)"/><rect x="215" y="15" width="5" height="5" fill="rgb(222, 219, 214)"/><rect x="220" y="15" width="5" height="5" fill="rgb(222, 219, 214)"/><rect x="225" y="15" width="5" height="5" fill="rgb(216, 216, 216)"/><rect x="230" y="15" width="5" height="5" fill="rgb(212, 216, 224)"/><rect x="235" y="15" width="5" height="5" fill="rgb(216, 216, 216)"/><rect x="240" y="15" width="5" height="5" fill="rgb(222, 219, 214)"/><rect x="245" y="15" width="5" height="5" fill="rgb(212, 216, 224)"/><rect x="250" y="15" width="5" height="5" fill="rgb(216, 216, 216)"/><rect x="255" y="15" width="5" height="5" fill="rgb(216, 216, 216)"/><rect x="260" y="15" width="5" height="5" fill="rgb(219, 217, 216)"/></svg>
<svg class="r" style="left:428px;top:747px" width="145" height="15"><rect x="0" y="0" width="5" height="5" fill="rgb(239, 237, 236)"/><rect x="5" y="0" width="5" height="5" fill="rgb(251, 248, 243)"/><rect x="10" y="0" width="5" height="5" fill="rgb(232, 236, 244)"/><rect x="15" y="0" width="5" height="5" fill="rgb(233, 233, 233)"/><rect x="20" y="0" width="5" height="5" fill="rgb(239, 243, 251)"/><rect x="25" y="0" width="5" height="5" fill="rgb(244, 248, 255)"/><rect x="30" y="0" width="5" height="5" fill="rgb(220, 220, 220)"/><rect x="35" y="0" width="5" height="5" fill="rgb(251, 248, 243)"/><rect x="40" y="0" width="5" height="5" fill="rgb(213, 217, 225)"/><rect x="45" y="0" width="5" height="5" fill="rgb(230, 228, 227)"/><rect x="50" y="0" width="5" height="5" fill="rgb(240, 238, 237)"/><rect x="55" y="0" width="5" height="5" fill="rgb(235, 239, 247)"/><rect x="60" y="0" width="5" height="5" fill="rgb(219, 216, 211)"/><rect x="65" y="0" width="5" height="5" fill="rgb(217, 215, 214)"/><rect x="70" y="0" width="5" height="5" fill="rgb(242, 242, 242)"/><rect x="75" y="0" width="5" height="5" fill="rgb(243, 243, 243)"/><rect x="80" y="0" width="5" height="5" fill="rgb(219, 217, 216)"/><rect x="85" y="0" width="5" height="5" fill="rgb(248, 246, 245)"/><rect x="90" y="0" width="5" height="5" fill="rgb(246, 243, 238)"/><rect x="95" y="0" width="5" height="5" fill="rgb(224, 221, 216)"/><rect x="100" y="0" width="5" height="5" fill="rgb(227, 224, 219)"/><rect x="105" y="0" width="5" height="5" fill="rgb(245, 245, 245)"/><rect x="110" y="0" width="5" height="5" fill="rgb(241, 241, 241)"/><rect x="115" y="0" width="5" height="5" fill="rgb(247, 247, 247)"/><rect x="120" y="0" width="5" height="5" fill="rgb(218, 215, 210)"/><rect x="125" y="0" width="5" height="5" fill="rgb(226, 226, 226)"/><rect x="130" y="0" width="5" height="5" fill="rgb(210, 214, 222)"/><rect x="0" y="5" width="5" height="5" fill="rgb(172, 176, 184)"/><rect x="5" y="5" width="5" height="5" fill="rgb(230, 228, 227)"/><rect x="10" y="5" width="5" height="5" fill="rgb(174, 174, 174)"/><rect x="15" y="5" width="5" height="5" fill="rgb(165, 169, 177)"/><rect x="20" y="5" width="5" height="5" fill="rgb(227, 227, 227)"/><rect x="25" y="5" width="5" height="5" fill="rgb(187, 185, 184)"/><rect x="30" y="5" width="5" height="5" fill="rgb(199, 196, 191)"/><rect x="35" y="5" width="5" height="5" fill="rgb(160, 160, 160)"/><rect x="40" y="5" width="5" height="5" fill="rgb(224, 228, 236)"/><rect x="45" y="5" width="5" height="5" fill="rgb(214, 218, 226)"/><rect x="50" y="5" width="5" height="5" fill="rgb(206, 203, 198)"/><rect x="55" y="5" width="5" height="5" fill="rgb(220, 220, 220)"/><rect x="60" y="5" width="5" height="5" fill="rgb(190, 190, 190)"/><rect x="65" y="5" width="5" height="5" fill="rgb(191, 191, 191)"/><rect x="70" y="5" width="5" height="5" fill="rgb(208, 212, 220)"/><rect x="75" y="5" width="5" height="5" fill="rgb(167, 167, 167)"/><rect x="80" y="5" width="5" height="5" fill="rgb(187, 185, 184)"/><rect x="85" y="5" width="5" height="5" fill="rgb(213, 213, 213)"/><rect x="90" y="5" width="5" height="5" fill="rgb(198, 195, 190)"/><rect x="95" y="5" width="5" height="5" fill="rgb(210, 214, 222)"/><rect x="100" y="5" width="5" height="5" fill="rgb(192, 190, 189)"/><rect x="105" y="5" width="5" height="5" fill="rgb(160, 164, 172)"/><rect x="110" y="5" width="5" height="5" fill="rgb(209, 213, 221)"/><rect x="115" y="5" width="5" height="5" fill="rgb(216, 213, 208)"/><rect x="120" y="5" width="5" height="5" fill="rgb(156, 160, 168)"/><rect x="125" y="5" width="5" height="5" fill="rgb(224, 224, 224)"/><rect x="130" y="5" width="5" height="5" fill="rgb(189, 187, 186)"/><rect x="135" y="5" width="5" height="5" fill="rgb(238,238,242)"/><rect x="0" y="10" width="5" height="5" fill="rgb(195, 192, 187)"/><rect x="5" y="10" width="5" height="5" fill="rgb(187, 185, 184)"/><rect x="10" y="10" width="5" height="5" fill="rgb(180, 184, 192)"/><rect x="15" y="10" width="5" height="5" fill="rgb(214, 218, 226)"/><rect x="20" y="10" width="5" height="5" fill="rgb(176, 176, 176)"/><rect x="25" y="10" width="5" height="5" fill="rgb(201, 201, 201)"/><rect x="30" y="10" width="5" height="5" fill="rgb(187, 184, 179)"/><rect x="35" y="10" width="5" height="5" fill="rgb(204, 202, 201)"/><rect x="40" y="10" width="5" height="5" fill="rgb(228, 228, 228)"/><rect x="45" y="10" width="5" height="5" fill="rgb(214, 211, 206)"/><rect x="50" y="10" width="5" height="5" fill="rgb(195, 195, 195)"/><rect x="55" y="10" width="5" height="5" fill="rgb(183, 183, 183)"/><rect x="60" y="10" width="5" height="5" fill="rgb(214, 211, 206)"/><rect x="65" y="10" width="5" height="5" fill="rgb(196, 196, 196)"/><rect x="70" y="10" width="5" height="5" fill="rgb(215, 215, 215)"/><rect x="75" y="10" width="5" height="5" fill="rgb(184, 182, 181)"/><rect x="80" y="10" width="5" height="5" fill="rgb(194, 198, 206)"/><rect x="85" y="10" width="5" height="5" fill="rgb(216, 216, 216)"/><rect x="90" y="10" width="5" height="5" fill="rgb(181, 178, 173)"/><rect x="95" y="10" width="5" height="5" fill="rgb(197, 194, 189)"/><rect x="100" y="10" width="5" height="5" fill="rgb(181, 181, 181)"/><rect x="105" y="10" width="5" height="5" fill="rgb(220, 218, 217)"/><rect x="110" y="10" width="5" height="5" fill="rgb(168, 172, 180)"/><rect x="115" y="10" width="5" height="5" fill="rgb(215, 213, 212)"/><rect x="120" y="10" width="5" height="5" fill="rgb(219, 223, 231)"/><rect x="125" y="10" width="5" height="5" fill="rgb(194, 192, 191)"/><rect x="130" y="10" width="5" height="5" fill="rgb(180, 180, 180)"/><rect x="135" y="10" width="5" height="5" fill="rgb(235,235,239)"/></svg>
<div class="t" style="left:731px;top:749.01px;font-size:14.2px;color:#333;font-weight:400;letter-spacing:0px;">French</div>
<svg class="r" style="left:858px;top:746px" width="18" height="18" viewBox="0 0 18 18"><circle cx="9.2" cy="9" r="7.4" fill="none" stroke="#fca566" stroke-width="1.1"/><path d="M5.3 8.8 L8.1 11.8 L13.1 6.7" fill="none" stroke="#fb9d57" stroke-width="1.7"/></svg>
<div class="t" style="left:884px;top:749.01px;font-size:14.6px;color:#333;font-weight:400;letter-spacing:0px;">Implied</div>
<div class="t" style="left:1003.6px;top:749.01px;font-size:14.2px;color:#333;font-weight:400;letter-spacing:0px;">2024-01-25 14:25</div>
<svg class="r" style="left:1216px;top:754px" width="24" height="6" viewBox="0 0 24 6"><circle cx="3.1" cy="3" r="1.95" fill="#3e3ac6"/><circle cx="11.5" cy="3" r="1.95" fill="#3e3ac6"/><circle cx="19.9" cy="3" r="1.95" fill="#3e3ac6"/></svg>
<div class="r" style="left:987px;top:786px;width:211px;height:56px;background:#f9f9f9"></div>
<div class="r" style="left:58px;top:842px;width:47px;height:1px;background:#ececec"></div>
<div class="r" style="left:105px;top:841px;width:487px;height:5px;background:#fbfbfb"></div>
<div class="r" style="left:592px;top:842px;width:666px;height:1px;background:#ececec"></div>
<div class="r" style="left:84px;top:808px;width:13px;height:13px;box-sizing:border-box;border:1px solid #767676;border-radius:2px;background:#fff"></div>
<svg class="r" style="left:123px;top:807px" width="275" height="15"><rect x="0" y="0" width="5" height="5" fill="rgb(213, 217, 225)"/><rect x="5" y="0" width="5" height="5" fill="rgb(213, 217, 225)"/><rect x="10" y="0" width="5" height="5" fill="rgb(238, 238, 238)"/><rect x="15" y="0" width="5" height="5" fill="rgb(253, 250, 245)"/><rect x="20" y="0" width="5" height="5" fill="rgb(232, 236, 244)"/><rect x="25" y="0" width="5" height="5" fill="rgb(234, 232, 231)"/><rect x="30" y="0" width="5" height="5" fill="rgb(217, 217, 217)"/><rect x="35" y="0" width="5" height="5" fill="rgb(248, 245, 240)"/><rect x="40" y="0" width="5" height="5" fill="rgb(235, 235, 235)"/><rect x="45" y="0" width="5" height="5" fill="rgb(246, 243, 238)"/><rect x="50" y="0" width="5" height="5" fill="rgb(228, 232, 240)"/><rect x="55" y="0" width="5" height="5" fill="rgb(242, 242, 242)"/><rect x="60" y="0" width="5" height="5" fill="rgb(244, 241, 236)"/><rect x="65" y="0" width="5" height="5" fill="rgb(237, 237, 237)"/><rect x="70" y="0" width="5" height="5" fill="rgb(236, 236, 236)"/><rect x="75" y="0" width="5" height="5" fill="rgb(241, 241, 241)"/><rect x="80" y="0" width="5" height="5" fill="rgb(211, 215, 223)"/><rect x="85" y="0" width="5" height="5" fill="rgb(224, 224, 224)"/><rect x="90" y="0" width="5" height="5" fill="rgb(246, 250, 255)"/><rect x="95" y="0" width="5" height="5" fill="rgb(231, 235, 243)"/><rect x="100" y="0" width="5" height="5" fill="rgb(233, 233, 233)"/><rect x="105" y="0" width="5" height="5" fill="rgb(210, 214, 222)"/><rect x="110" y="0" width="5" height="5" fill="rgb(228, 232, 240)"/><rect x="115" y="0" width="5" height="5" fill="rgb(231, 231, 231)"/><rect x="120" y="0" width="5" height="5" fill="rgb(250, 250, 250)"/><rect x="125" y="0" width="5" height="5" fill="rgb(219, 216, 211)"/><rect x="130" y="0" width="5" height="5" fill="rgb(221, 219, 218)"/><rect x="135" y="0" width="5" height="5" fill="rgb(244, 242, 241)"/><rect x="140" y="0" width="5" height="5" fill="rgb(231, 229, 228)"/><rect x="145" y="0" width="5" height="5" fill="rgb(249, 246, 241)"/><rect x="150" y="0" width="5" height="5" fill="rgb(249, 246, 241)"/><rect x="155" y="0" width="5" height="5" fill="rgb(208, 212, 220)"/><rect x="160" y="0" width="5" height="5" fill="rgb(221, 221, 221)"/><rect x="165" y="0" width="5" height="5" fill="rgb(223, 227, 235)"/><rect x="170" y="0" width="5" height="5" fill="rgb(235, 233, 232)"/><rect x="175" y="0" width="5" height="5" fill="rgb(235, 235, 235)"/><rect x="180" y="0" width="5" height="5" fill="rgb(217, 217, 217)"/><rect x="185" y="0" width="5" height="5" fill="rgb(227, 225, 224)"/><rect x="190" y="0" width="5" height="5" fill="rgb(228, 225, 220)"/><rect x="195" y="0" width="5" height="5" fill="rgb(238, 238, 238)"/><rect x="200" y="0" width="5" height="5" fill="rgb(217, 215, 214)"/><rect x="205" y="0" width="5" height="5" fill="rgb(247, 247, 247)"/><rect x="210" y="0" width="5" height="5" fill="rgb(238, 235, 230)"/><rect x="215" y="0" width="5" height="5" fill="rgb(239, 239, 239)"/><rect x="220" y="0" width="5" height="5" fill="rgb(212, 216, 224)"/><rect x="225" y="0" width="5" height="5" fill="rgb(223, 220, 215)"/><rect x="230" y="0" width="5" height="5" fill="rgb(221, 219, 218)"/><rect x="235" y="0" width="5" height="5" fill="rgb(246, 244, 243)"/><rect x="240" y="0" width="5" height="5" fill="rgb(229, 226, 221)"/><rect x="245" y="0" width="5" height="5" fill="rgb(223, 221, 220)"/><rect x="250" y="0" width="5" height="5" fill="rgb(241, 241, 241)"/><rect x="255" y="0" width="5" height="5" fill="rgb(227, 227, 227)"/><rect x="260" y="0" width="5" height="5" fill="rgb(215, 219, 227)"/><rect x="0" y="5" width="5" height="5" fill="rgb(193, 197, 205)"/><rect x="5" y="5" width="5" height="5" fill="rgb(190, 194, 202)"/><rect x="10" y="5" width="5" height="5" fill="rgb(188, 192, 200)"/><rect x="15" y="5" width="5" height="5" fill="rgb(188, 186, 185)"/><rect x="20" y="5" width="5" height="5" fill="rgb(197, 194, 189)"/><rect x="25" y="5" width="5" height="5" fill="rgb(197, 194, 189)"/><rect x="30" y="5" width="5" height="5" fill="rgb(175, 179, 187)"/><rect x="35" y="5" width="5" height="5" fill="rgb(180, 184, 192)"/><rect x="40" y="5" width="5" height="5" fill="rgb(171, 169, 168)"/><rect x="45" y="5" width="5" height="5" fill="rgb(198, 195, 190)"/><rect x="50" y="5" width="5" height="5" fill="rgb(224, 224, 224)"/><rect x="55" y="5" width="5" height="5" fill="rgb(189, 189, 189)"/><rect x="60" y="5" width="5" height="5" fill="rgb(219, 219, 219)"/><rect x="65" y="5" width="5" height="5" fill="rgb(173, 173, 173)"/><rect x="70" y="5" width="5" height="5" fill="rgb(226, 223, 218)"/><rect x="75" y="5" width="5" height="5" fill="rgb(213, 217, 225)"/><rect x="80" y="5" width="5" height="5" fill="rgb(161, 165, 173)"/><rect x="85" y="5" width="5" height="5" fill="rgb(189, 189, 189)"/><rect x="90" y="5" width="5" height="5" fill="rgb(172, 169, 164)"/><rect x="95" y="5" width="5" height="5" fill="rgb(184, 184, 184)"/><rect x="100" y="5" width="5" height="5" fill="rgb(207, 207, 207)"/><rect x="105" y="5" width="5" height="5" fill="rgb(185, 183, 182)"/><rect x="110" y="5" width="5" height="5" fill="rgb(193, 193, 193)"/><rect x="115" y="5" width="5" height="5" fill="rgb(173, 173, 173)"/><rect x="120" y="5" width="5" height="5" fill="rgb(210, 207, 202)"/><rect x="125" y="5" width="5" height="5" fill="rgb(160, 164, 172)"/><rect x="130" y="5" width="5" height="5" fill="rgb(209, 206, 201)"/><rect x="135" y="5" width="5" height="5" fill="rgb(171, 168, 163)"/><rect x="140" y="5" width="5" height="5" fill="rgb(192, 192, 192)"/><rect x="145" y="5" width="5" height="5" fill="rgb(186, 186, 186)"/><rect x="150" y="5" width="5" height="5" fill="rgb(204, 202, 201)"/><rect x="155" y="5" width="5" height="5" fill="rgb(213, 210, 205)"/><rect x="160" y="5" width="5" height="5" fill="rgb(199, 199, 199)"/><rect x="165" y="5" width="5" height="5" fill="rgb(186, 186, 186)"/><rect x="170" y="5" width="5" height="5" fill="rgb(223, 223, 223)"/><rect x="175" y="5" width="5" height="5" fill="rgb(221, 221, 221)"/><rect x="180" y="5" width="5" height="5" fill="rgb(212, 212, 212)"/><rect x="185" y="5" width="5" height="5" fill="rgb(210, 210, 210)"/><rect x="190" y="5" width="5" height="5" fill="rgb(179, 179, 179)"/><rect x="195" y="5" width="5" height="5" fill="rgb(177, 174, 169)"/><rect x="200" y="5" width="5" height="5" fill="rgb(206, 210, 218)"/><rect x="205" y="5" width="5" height="5" fill="rgb(208, 212, 220)"/><rect x="210" y="5" width="5" height="5" fill="rgb(202, 200, 199)"/><rect x="215" y="5" width="5" height="5" fill="rgb(162, 166, 174)"/><rect x="220" y="5" width="5" height="5" fill="rgb(208, 206, 205)"/><rect x="225" y="5" width="5" height="5" fill="rgb(213, 213, 213)"/><rect x="230" y="5" width="5" height="5" fill="rgb(212, 209, 204)"/><rect x="235" y="5" width="5" height="5" fill="rgb(213, 211, 210)"/><rect x="240" y="5" width="5" height="5" fill="rgb(186, 186, 186)"/><rect x="245" y="5" width="5" height="5" fill="rgb(221, 218, 213)"/><rect x="250" y="5" width="5" height="5" fill="rgb(214, 214, 214)"/><rect x="255" y="5" width="5" height="5" fill="rgb(174, 172, 171)"/><rect x="260" y="5" width="5" height="5" fill="rgb(209, 207, 206)"/><rect x="265" y="5" width="5" height="5" fill="rgb(247,247,251)"/><rect x="0" y="10" width="5" height="5" fill="rgb(186, 183, 178)"/><rect x="5" y="10" width="5" height="5" fill="rgb(170, 170, 170)"/><rect x="10" y="10" width="5" height="5" fill="rgb(211, 208, 203)"/><rect x="15" y="10" width="5" height="5" fill="rgb(214, 212, 211)"/><rect x="20" y="10" width="5" height="5" fill="rgb(175, 175, 175)"/><rect x="25" y="10" width="5" height="5" fill="rgb(205, 209, 217)"/><rect x="30" y="10" width="5" height="5" fill="rgb(217, 217, 217)"/><rect x="35" y="10" width="5" height="5" fill="rgb(186, 183, 178)"/><rect x="40" y="10" width="5" height="5" fill="rgb(188, 192, 200)"/><rect x="45" y="10" width="5" height="5" fill="rgb(180, 180, 180)"/><rect x="50" y="10" width="5" height="5" fill="rgb(180, 180, 180)"/><rect x="55" y="10" width="5" height="5" fill="rgb(179, 177, 176)"/><rect x="60" y="10" width="5" height="5" fill="rgb(207, 204, 199)"/><rect x="65" y="10" width="5" height="5" fill="rgb(195, 192, 187)"/><rect x="70" y="10" width="5" height="5" fill="rgb(223, 223, 223)"/><rect x="75" y="10" width="5" height="5" fill="rgb(231, 229, 228)"/><rect x="80" y="10" width="5" height="5" fill="rgb(190, 190, 190)"/><rect x="85" y="10" width="5" height="5" fill="rgb(211, 209, 208)"/><rect x="90" y="10" width="5" height="5" fill="rgb(175, 175, 175)"/><rect x="95" y="10" width="5" height="5" fill="rgb(220, 217, 212)"/><rect x="100" y="10" width="5" height="5" fill="rgb(216, 213, 208)"/><rect x="105" y="10" width="5" height="5" fill="rgb(212, 210, 209)"/><rect x="110" y="10" width="5" height="5" fill="rgb(215, 212, 207)"/><rect x="115" y="10" width="5" height="5" fill="rgb(226, 224, 223)"/><rect x="120" y="10" width="5" height="5" fill="rgb(181, 181, 181)"/><rect x="125" y="10" width="5" height="5" fill="rgb(183, 183, 183)"/><rect x="130" y="10" width="5" height="5" fill="rgb(195, 195, 195)"/><rect x="135" y="10" width="5" height="5" fill="rgb(183, 181, 180)"/><rect x="140" y="10" width="5" height="5" fill="rgb(192, 192, 192)"/><rect x="145" y="10" width="5" height="5" fill="rgb(185, 182, 177)"/><rect x="150" y="10" width="5" height="5" fill="rgb(222, 219, 214)"/><rect x="155" y="10" width="5" height="5" fill="rgb(172, 172, 172)"/><rect x="160" y="10" width="5" height="5" fill="rgb(223, 223, 223)"/><rect x="165" y="10" width="5" height="5" fill="rgb(208, 212, 220)"/><rect x="170" y="10" width="5" height="5" fill="rgb(180, 178, 177)"/><rect x="175" y="10" width="5" height="5" fill="rgb(211, 209, 208)"/><rect x="180" y="10" width="5" height="5" fill="rgb(201, 205, 213)"/><rect x="185" y="10" width="5" height="5" fill="rgb(214, 212, 211)"/><rect x="190" y="10" width="5" height="5" fill="rgb(189, 189, 189)"/><rect x="195" y="10" width="5" height="5" fill="rgb(188, 186, 185)"/><rect x="200" y="10" width="5" height="5" fill="rgb(190, 194, 202)"/><rect x="205" y="10" width="5" height="5" fill="rgb(198, 198, 198)"/><rect x="210" y="10" width="5" height="5" fill="rgb(204, 201, 196)"/><rect x="215" y="10" width="5" height="5" fill="rgb(171, 171, 171)"/><rect x="220" y="10" width="5" height="5" fill="rgb(212, 210, 209)"/><rect x="225" y="10" width="5" height="5" fill="rgb(205, 202, 197)"/><rect x="230" y="10" width="5" height="5" fill="rgb(198, 198, 198)"/><rect x="235" y="10" width="5" height="5" fill="rgb(222, 220, 219)"/><rect x="240" y="10" width="5" height="5" fill="rgb(229, 226, 221)"/><rect x="245" y="10" width="5" height="5" fill="rgb(224, 222, 221)"/><rect x="250" y="10" width="5" height="5" fill="rgb(195, 195, 195)"/><rect x="255" y="10" width="5" height="5" fill="rgb(180, 177, 172)"/><rect x="260" y="10" width="5" height="5" fill="rgb(195, 193, 192)"/><rect x="265" y="10" width="5" height="5" fill="rgb(240,240,244)"/></svg>
<svg class="r" style="left:428px;top:807px" width="105" height="15"><rect x="0" y="0" width="5" height="5" fill="rgb(220, 218, 217)"/><rect x="5" y="0" width="5" height="5" fill="rgb(244, 244, 244)"/><rect x="10" y="0" width="5" height="5" fill="rgb(214, 214, 214)"/><rect x="15" y="0" width="5" height="5" fill="rgb(220, 220, 220)"/><rect x="20" y="0" width="5" height="5" fill="rgb(232, 232, 232)"/><rect x="25" y="0" width="5" height="5" fill="rgb(217, 217, 217)"/><rect x="30" y="0" width="5" height="5" fill="rgb(247, 245, 244)"/><rect x="35" y="0" width="5" height="5" fill="rgb(220, 220, 220)"/><rect x="40" y="0" width="5" height="5" fill="rgb(216, 216, 216)"/><rect x="45" y="0" width="5" height="5" fill="rgb(225, 222, 217)"/><rect x="50" y="0" width="5" height="5" fill="rgb(223, 221, 220)"/><rect x="55" y="0" width="5" height="5" fill="rgb(236, 233, 228)"/><rect x="60" y="0" width="5" height="5" fill="rgb(226, 226, 226)"/><rect x="65" y="0" width="5" height="5" fill="rgb(234, 234, 234)"/><rect x="70" y="0" width="5" height="5" fill="rgb(234, 231, 226)"/><rect x="75" y="0" width="5" height="5" fill="rgb(232, 232, 232)"/><rect x="80" y="0" width="5" height="5" fill="rgb(232, 230, 229)"/><rect x="85" y="0" width="5" height="5" fill="rgb(217, 221, 229)"/><rect x="90" y="0" width="5" height="5" fill="rgb(247, 245, 244)"/><rect x="0" y="5" width="5" height="5" fill="rgb(186, 186, 186)"/><rect x="5" y="5" width="5" height="5" fill="rgb(193, 193, 193)"/><rect x="10" y="5" width="5" height="5" fill="rgb(230, 227, 222)"/><rect x="15" y="5" width="5" height="5" fill="rgb(196, 200, 208)"/><rect x="20" y="5" width="5" height="5" fill="rgb(170, 167, 162)"/><rect x="25" y="5" width="5" height="5" fill="rgb(186, 184, 183)"/><rect x="30" y="5" width="5" height="5" fill="rgb(176, 180, 188)"/><rect x="35" y="5" width="5" height="5" fill="rgb(204, 202, 201)"/><rect x="40" y="5" width="5" height="5" fill="rgb(177, 181, 189)"/><rect x="45" y="5" width="5" height="5" fill="rgb(174, 174, 174)"/><rect x="50" y="5" width="5" height="5" fill="rgb(162, 166, 174)"/><rect x="55" y="5" width="5" height="5" fill="rgb(217, 217, 217)"/><rect x="60" y="5" width="5" height="5" fill="rgb(226, 226, 226)"/><rect x="65" y="5" width="5" height="5" fill="rgb(169, 173, 181)"/><rect x="70" y="5" width="5" height="5" fill="rgb(231, 229, 228)"/><rect x="75" y="5" width="5" height="5" fill="rgb(203, 207, 215)"/><rect x="80" y="5" width="5" height="5" fill="rgb(204, 208, 216)"/><rect x="85" y="5" width="5" height="5" fill="rgb(174, 178, 186)"/><rect x="90" y="5" width="5" height="5" fill="rgb(202, 202, 202)"/><rect x="95" y="5" width="5" height="5" fill="rgb(242,242,246)"/><rect x="0" y="10" width="5" height="5" fill="rgb(190, 187, 182)"/><rect x="5" y="10" width="5" height="5" fill="rgb(209, 209, 209)"/><rect x="10" y="10" width="5" height="5" fill="rgb(188, 188, 188)"/><rect x="15" y="10" width="5" height="5" fill="rgb(182, 186, 194)"/><rect x="20" y="10" width="5" height="5" fill="rgb(210, 210, 210)"/><rect x="25" y="10" width="5" height="5" fill="rgb(208, 212, 220)"/><rect x="30" y="10" width="5" height="5" fill="rgb(216, 216, 216)"/><rect x="35" y="10" width="5" height="5" fill="rgb(217, 217, 217)"/><rect x="40" y="10" width="5" height="5" fill="rgb(190, 187, 182)"/><rect x="45" y="10" width="5" height="5" fill="rgb(188, 188, 188)"/><rect x="50" y="10" width="5" height="5" fill="rgb(213, 211, 210)"/><rect x="55" y="10" width="5" height="5" fill="rgb(196, 196, 196)"/><rect x="60" y="10" width="5" height="5" fill="rgb(193, 193, 193)"/><rect x="65" y="10" width="5" height="5" fill="rgb(181, 179, 178)"/><rect x="70" y="10" width="5" height="5" fill="rgb(184, 184, 184)"/><rect x="75" y="10" width="5" height="5" fill="rgb(211, 211, 211)"/><rect x="80" y="10" width="5" height="5" fill="rgb(171, 171, 171)"/><rect x="85" y="10" width="5" height="5" fill="rgb(170, 170, 170)"/><rect x="90" y="10" width="5" height="5" fill="rgb(188, 192, 200)"/><rect x="95" y="10" width="5" height="5" fill="rgb(236,236,240)"/></svg>
<div class="t" style="left:731px;top:806.01px;font-size:14.2px;color:#333;font-weight:400;letter-spacing:0px;">French</div>
<svg class="r" style="left:858px;top:803px" width="18" height="18" viewBox="0 0 18 18"><circle cx="9.2" cy="9" r="7.4" fill="none" stroke="#fca566" stroke-width="1.1"/><path d="M5.3 8.8 L8.1 11.8 L13.1 6.7" fill="none" stroke="#fb9d57" stroke-width="1.7"/></svg>
<div class="t" style="left:884px;top:806.01px;font-size:14.6px;color:#333;font-weight:400;letter-spacing:0px;">Implied</div>
<div class="t" style="left:1003.6px;top:806.01px;font-size:14.2px;color:#333;font-weight:400;letter-spacing:0px;">2023-11-15 17:40</div>
<svg class="r" style="left:1216px;top:811px" width="24" height="6" viewBox="0 0 24 6"><circle cx="3.1" cy="3" r="1.95" fill="#3e3ac6"/><circle cx="11.5" cy="3" r="1.95" fill="#3e3ac6"/><circle cx="19.9" cy="3" r="1.95" fill="#3e3ac6"/></svg>
<div class="r" style="left:987px;top:843px;width:211px;height:56px;background:#f9f9f9"></div>
<div class="r" style="left:58px;top:899px;width:47px;height:1px;background:#ececec"></div>
<div class="r" style="left:105px;top:898px;width:487px;height:5px;background:#fbfbfb"></div>
<div class="r" style="left:592px;top:899px;width:666px;height:1px;background:#ececec"></div>
<div class="r" style="left:84px;top:865px;width:13px;height:13px;box-sizing:border-box;border:1px solid #767676;border-radius:2px;background:#fff"></div>
<svg class="r" style="left:123px;top:862px" width="275" height="15"><rect x="0" y="0" width="5" height="5" fill="rgb(241, 245, 253)"/><rect x="5" y="0" width="5" height="5" fill="rgb(252, 249, 244)"/><rect x="10" y="0" width="5" height="5" fill="rgb(238, 238, 238)"/><rect x="15" y="0" width="5" height="5" fill="rgb(231, 231, 231)"/><rect x="20" y="0" width="5" height="5" fill="rgb(226, 223, 218)"/><rect x="25" y="0" width="5" height="5" fill="rgb(235, 235, 235)"/><rect x="30" y="0" width="5" height="5" fill="rgb(248, 245, 240)"/><rect x="35" y="0" width="5" height="5" fill="rgb(220, 220, 220)"/><rect x="40" y="0" width="5" height="5" fill="rgb(233, 230, 225)"/><rect x="45" y="0" width="5" height="5" fill="rgb(240, 240, 240)"/><rect x="50" y="0" width="5" height="5" fill="rgb(222, 219, 214)"/><rect x="55" y="0" width="5" height="5" fill="rgb(232, 230, 229)"/><rect x="60" y="0" width="5" height="5" fill="rgb(228, 228, 228)"/><rect x="65" y="0" width="5" height="5" fill="rgb(215, 215, 215)"/><rect x="70" y="0" width="5" height="5" fill="rgb(234, 234, 234)"/><rect x="75" y="0" width="5" height="5" fill="rgb(252, 250, 249)"/><rect x="80" y="0" width="5" height="5" fill="rgb(250, 250, 250)"/><rect x="85" y="0" width="5" height="5" fill="rgb(249, 246, 241)"/><rect x="90" y="0" width="5" height="5" fill="rgb(222, 222, 222)"/><rect x="95" y="0" width="5" height="5" fill="rgb(214, 214, 214)"/><rect x="100" y="0" width="5" height="5" fill="rgb(246, 246, 246)"/><rect x="105" y="0" width="5" height="5" fill="rgb(243, 240, 235)"/><rect x="110" y="0" width="5" height="5" fill="rgb(233, 230, 225)"/><rect x="115" y="0" width="5" height="5" fill="rgb(215, 215, 215)"/><rect x="120" y="0" width="5" height="5" fill="rgb(212, 212, 212)"/><rect x="125" y="0" width="5" height="5" fill="rgb(253, 250, 245)"/><rect x="130" y="0" width="5" height="5" fill="rgb(224, 222, 221)"/><rect x="135" y="0" width="5" height="5" fill="rgb(224, 224, 224)"/><rect x="140" y="0" width="5" height="5" fill="rgb(250, 250, 250)"/><rect x="145" y="0" width="5" height="5" fill="rgb(238, 238, 238)"/><rect x="150" y="0" width="5" height="5" fill="rgb(223, 223, 223)"/><rect x="155" y="0" width="5" height="5" fill="rgb(231, 231, 231)"/><rect x="160" y="0" width="5" height="5" fill="rgb(231, 231, 231)"/><rect x="165" y="0" width="5" height="5" fill="rgb(242, 242, 242)"/><rect x="170" y="0" width="5" height="5" fill="rgb(215, 213, 212)"/><rect x="175" y="0" width="5" height="5" fill="rgb(242, 240, 239)"/><rect x="180" y="0" width="5" height="5" fill="rgb(220, 218, 217)"/><rect x="185" y="0" width="5" height="5" fill="rgb(229, 226, 221)"/><rect x="190" y="0" width="5" height="5" fill="rgb(214, 218, 226)"/><rect x="195" y="0" width="5" height="5" fill="rgb(226, 226, 226)"/><rect x="200" y="0" width="5" height="5" fill="rgb(215, 219, 227)"/><rect x="205" y="0" width="5" height="5" fill="rgb(228, 228, 228)"/><rect x="210" y="0" width="5" height="5" fill="rgb(229, 229, 229)"/><rect x="215" y="0" width="5" height="5" fill="rgb(239, 239, 239)"/><rect x="220" y="0" width="5" height="5" fill="rgb(224, 228, 236)"/><rect x="225" y="0" width="5" height="5" fill="rgb(225, 225, 225)"/><rect x="230" y="0" width="5" height="5" fill="rgb(244, 244, 244)"/><rect x="235" y="0" width="5" height="5" fill="rgb(218, 222, 230)"/><rect x="240" y="0" width="5" height="5" fill="rgb(233, 230, 225)"/><rect x="245" y="0" width="5" height="5" fill="rgb(218, 222, 230)"/><rect x="250" y="0" width="5" height="5" fill="rgb(227, 225, 224)"/><rect x="255" y="0" width="5" height="5" fill="rgb(233, 233, 233)"/><rect x="260" y="0" width="5" height="5" fill="rgb(230, 228, 227)"/><rect x="0" y="5" width="5" height="5" fill="rgb(231, 229, 228)"/><rect x="5" y="5" width="5" height="5" fill="rgb(220, 220, 220)"/><rect x="10" y="5" width="5" height="5" fill="rgb(160, 160, 160)"/><rect x="15" y="5" width="5" height="5" fill="rgb(221, 218, 213)"/><rect x="20" y="5" width="5" height="5" fill="rgb(205, 202, 197)"/><rect x="25" y="5" width="5" height="5" fill="rgb(210, 210, 210)"/><rect x="30" y="5" width="5" height="5" fill="rgb(169, 169, 169)"/><rect x="35" y="5" width="5" height="5" fill="rgb(187, 184, 179)"/><rect x="40" y="5" width="5" height="5" fill="rgb(164, 164, 164)"/><rect x="45" y="5" width="5" height="5" fill="rgb(174, 174, 174)"/><rect x="50" y="5" width="5" height="5" fill="rgb(176, 180, 188)"/><rect x="55" y="5" width="5" height="5" fill="rgb(178, 178, 178)"/><rect x="60" y="5" width="5" height="5" fill="rgb(163, 163, 163)"/><rect x="65" y="5" width="5" height="5" fill="rgb(177, 177, 177)"/><rect x="70" y="5" width="5" height="5" fill="rgb(168, 168, 168)"/><rect x="75" y="5" width="5" height="5" fill="rgb(168, 168, 168)"/><rect x="80" y="5" width="5" height="5" fill="rgb(212, 209, 204)"/><rect x="85" y="5" width="5" height="5" fill="rgb(228, 228, 228)"/><rect x="90" y="5" width="5" height="5" fill="rgb(209, 209, 209)"/><rect x="95" y="5" width="5" height="5" fill="rgb(197, 194, 189)"/><rect x="100" y="5" width="5" height="5" fill="rgb(186, 186, 186)"/><rect x="105" y="5" width="5" height="5" fill="rgb(164, 164, 164)"/><rect x="110" y="5" width="5" height="5" fill="rgb(167, 171, 179)"/><rect x="115" y="5" width="5" height="5" fill="rgb(221, 221, 221)"/><rect x="120" y="5" width="5" height="5" fill="rgb(176, 176, 176)"/><rect x="125" y="5" width="5" height="5" fill="rgb(182, 186, 194)"/><rect x="130" y="5" width="5" height="5" fill="rgb(196, 200, 208)"/><rect x="135" y="5" width="5" height="5" fill="rgb(210, 214, 222)"/><rect x="140" y="5" width="5" height="5" fill="rgb(158, 162, 170)"/><rect x="145" y="5" width="5" height="5" fill="rgb(188, 192, 200)"/><rect x="150" y="5" width="5" height="5" fill="rgb(162, 166, 174)"/><rect x="155" y="5" width="5" height="5" fill="rgb(201, 201, 201)"/><rect x="160" y="5" width="5" height="5" fill="rgb(227, 225, 224)"/><rect x="165" y="5" width="5" height="5" fill="rgb(196, 196, 196)"/><rect x="170" y="5" width="5" height="5" fill="rgb(166, 164, 163)"/><rect x="175" y="5" width="5" height="5" fill="rgb(166, 164, 163)"/><rect x="180" y="5" width="5" height="5" fill="rgb(226, 226, 226)"/><rect x="185" y="5" width="5" height="5" fill="rgb(207, 205, 204)"/><rect x="190" y="5" width="5" height="5" fill="rgb(166, 166, 166)"/><rect x="195" y="5" width="5" height="5" fill="rgb(187, 187, 187)"/><rect x="200" y="5" width="5" height="5" fill="rgb(202, 199, 194)"/><rect x="205" y="5" width="5" height="5" fill="rgb(215, 215, 215)"/><rect x="210" y="5" width="5" height="5" fill="rgb(233, 230, 225)"/><rect x="215" y="5" width="5" height="5" fill="rgb(196, 196, 196)"/><rect x="220" y="5" width="5" height="5" fill="rgb(156, 160, 168)"/><rect x="225" y="5" width="5" height="5" fill="rgb(222, 222, 222)"/><rect x="230" y="5" width="5" height="5" fill="rgb(228, 225, 220)"/><rect x="235" y="5" width="5" height="5" fill="rgb(223, 223, 223)"/><rect x="240" y="5" width="5" height="5" fill="rgb(204, 204, 204)"/><rect x="245" y="5" width="5" height="5" fill="rgb(193, 193, 193)"/><rect x="250" y="5" width="5" height="5" fill="rgb(176, 180, 188)"/><rect x="255" y="5" width="5" height="5" fill="rgb(193, 190, 185)"/><rect x="260" y="5" width="5" height="5" fill="rgb(229, 226, 221)"/><rect x="265" y="5" width="5" height="5" fill="rgb(236,236,240)"/><rect x="0" y="10" width="5" height="5" fill="rgb(210, 210, 210)"/><rect x="5" y="10" width="5" height="5" fill="rgb(201, 201, 201)"/><rect x="10" y="10" width="5" height="5" fill="rgb(220, 220, 220)"/><rect x="15" y="10" width="5" height="5" fill="rgb(206, 210, 218)"/><rect x="20" y="10" width="5" height="5" fill="rgb(192, 192, 192)"/><rect x="25" y="10" width="5" height="5" fill="rgb(198, 196, 195)"/><rect x="30" y="10" width="5" height="5" fill="rgb(227, 227, 227)"/><rect x="35" y="10" width="5" height="5" fill="rgb(197, 197, 197)"/><rect x="40" y="10" width="5" height="5" fill="rgb(199, 196, 191)"/><rect x="45" y="10" width="5" height="5" fill="rgb(185, 189, 197)"/><rect x="50" y="10" width="5" height="5" fill="rgb(197, 197, 197)"/><rect x="55" y="10" width="5" height="5" fill="rgb(208, 205, 200)"/><rect x="60" y="10" width="5" height="5" fill="rgb(200, 197, 192)"/><rect x="65" y="10" width="5" height="5" fill="rgb(205, 202, 197)"/><rect x="70" y="10" width="5" height="5" fill="rgb(204, 204, 204)"/><rect x="75" y="10" width="5" height="5" fill="rgb(218, 218, 218)"/><rect x="80" y="10" width="5" height="5" fill="rgb(211, 211, 211)"/><rect x="85" y="10" width="5" height="5" fill="rgb(192, 192, 192)"/><rect x="90" y="10" width="5" height="5" fill="rgb(190, 190, 190)"/><rect x="95" y="10" width="5" height="5" fill="rgb(182, 180, 179)"/><rect x="100" y="10" width="5" height="5" fill="rgb(212, 212, 212)"/><rect x="105" y="10" width="5" height="5" fill="rgb(213, 217, 225)"/><rect x="110" y="10" width="5" height="5" fill="rgb(183, 181, 180)"/><rect x="115" y="10" width="5" height="5" fill="rgb(194, 198, 206)"/><rect x="120" y="10" width="5" height="5" fill="rgb(213, 210, 205)"/><rect x="125" y="10" width="5" height="5" fill="rgb(174, 178, 186)"/><rect x="130" y="10" width="5" height="5" fill="rgb(205, 202, 197)"/><rect x="135" y="10" width="5" height="5" fill="rgb(208, 205, 200)"/><rect x="140" y="10" width="5" height="5" fill="rgb(183, 187, 195)"/><rect x="145" y="10" width="5" height="5" fill="rgb(218, 218, 218)"/><rect x="150" y="10" width="5" height="5" fill="rgb(185, 182, 177)"/><rect x="155" y="10" width="5" height="5" fill="rgb(181, 185, 193)"/><rect x="160" y="10" width="5" height="5" fill="rgb(208, 208, 208)"/><rect x="165" y="10" width="5" height="5" fill="rgb(198, 195, 190)"/><rect x="170" y="10" width="5" height="5" fill="rgb(181, 185, 193)"/><rect x="175" y="10" width="5" height="5" fill="rgb(178, 182, 190)"/><rect x="180" y="10" width="5" height="5" fill="rgb(216, 216, 216)"/><rect x="185" y="10" width="5" height="5" fill="rgb(180, 180, 180)"/><rect x="190" y="10" width="5" height="5" fill="rgb(185, 183, 182)"/><rect x="195" y="10" width="5" height="5" fill="rgb(185, 182, 177)"/><rect x="200" y="10" width="5" height="5" fill="rgb(216, 220, 228)"/><rect x="205" y="10" width="5" height="5" fill="rgb(212, 216, 224)"/><rect x="210" y="10" width="5" height="5" fill="rgb(193, 197, 205)"/><rect x="215" y="10" width="5" height="5" fill="rgb(182, 182, 182)"/><rect x="220" y="10" width="5" height="5" fill="rgb(210, 210, 210)"/><rect x="225" y="10" width="5" height="5" fill="rgb(193, 190, 185)"/><rect x="230" y="10" width="5" height="5" fill="rgb(229, 227, 226)"/><rect x="235" y="10" width="5" height="5" fill="rgb(199, 199, 199)"/><rect x="240" y="10" width="5" height="5" fill="rgb(173, 171, 170)"/><rect x="245" y="10" width="5" height="5" fill="rgb(227, 225, 224)"/><rect x="250" y="10" width="5" height="5" fill="rgb(220, 217, 212)"/><rect x="255" y="10" width="5" height="5" fill="rgb(198, 202, 210)"/><rect x="260" y="10" width="5" height="5" fill="rgb(199, 199, 199)"/><rect x="265" y="10" width="5" height="5" fill="rgb(237,237,241)"/></svg>
<svg class="r" style="left:428px;top:862px" width="115" height="15"><rect x="0" y="0" width="5" height="5" fill="rgb(228, 228, 228)"/><rect x="5" y="0" width="5" height="5" fill="rgb(237, 237, 237)"/><rect x="10" y="0" width="5" height="5" fill="rgb(230, 228, 227)"/><rect x="15" y="0" width="5" height="5" fill="rgb(248, 248, 248)"/><rect x="20" y="0" width="5" height="5" fill="rgb(244, 241, 236)"/><rect x="25" y="0" width="5" height="5" fill="rgb(255, 252, 247)"/><rect x="30" y="0" width="5" height="5" fill="rgb(223, 223, 223)"/><rect x="35" y="0" width="5" height="5" fill="rgb(244, 242, 241)"/><rect x="40" y="0" width="5" height="5" fill="rgb(228, 232, 240)"/><rect x="45" y="0" width="5" height="5" fill="rgb(221, 219, 218)"/><rect x="50" y="0" width="5" height="5" fill="rgb(230, 228, 227)"/><rect x="55" y="0" width="5" height="5" fill="rgb(218, 222, 230)"/><rect x="60" y="0" width="5" height="5" fill="rgb(242, 240, 239)"/><rect x="65" y="0" width="5" height="5" fill="rgb(241, 241, 241)"/><rect x="70" y="0" width="5" height="5" fill="rgb(238, 238, 238)"/><rect x="75" y="0" width="5" height="5" fill="rgb(219, 223, 231)"/><rect x="80" y="0" width="5" height="5" fill="rgb(215, 213, 212)"/><rect x="85" y="0" width="5" height="5" fill="rgb(243, 243, 243)"/><rect x="90" y="0" width="5" height="5" fill="rgb(210, 214, 222)"/><rect x="95" y="0" width="5" height="5" fill="rgb(252, 249, 244)"/><rect x="100" y="0" width="5" height="5" fill="rgb(228, 225, 220)"/><rect x="0" y="5" width="5" height="5" fill="rgb(222, 226, 234)"/><rect x="5" y="5" width="5" height="5" fill="rgb(172, 172, 172)"/><rect x="10" y="5" width="5" height="5" fill="rgb(218, 218, 218)"/><rect x="15" y="5" width="5" height="5" fill="rgb(189, 187, 186)"/><rect x="20" y="5" width="5" height="5" fill="rgb(225, 225, 225)"/><rect x="25" y="5" width="5" height="5" fill="rgb(207, 207, 207)"/><rect x="30" y="5" width="5" height="5" fill="rgb(206, 204, 203)"/><rect x="35" y="5" width="5" height="5" fill="rgb(224, 221, 216)"/><rect x="40" y="5" width="5" height="5" fill="rgb(186, 184, 183)"/><rect x="45" y="5" width="5" height="5" fill="rgb(225, 225, 225)"/><rect x="50" y="5" width="5" height="5" fill="rgb(205, 205, 205)"/><rect x="55" y="5" width="5" height="5" fill="rgb(188, 192, 200)"/><rect x="60" y="5" width="5" height="5" fill="rgb(211, 209, 208)"/><rect x="65" y="5" width="5" height="5" fill="rgb(167, 167, 167)"/><rect x="70" y="5" width="5" height="5" fill="rgb(172, 170, 169)"/><rect x="75" y="5" width="5" height="5" fill="rgb(209, 213, 221)"/><rect x="80" y="5" width="5" height="5" fill="rgb(193, 193, 193)"/><rect x="85" y="5" width="5" height="5" fill="rgb(184, 188, 196)"/><rect x="90" y="5" width="5" height="5" fill="rgb(211, 211, 211)"/><rect x="95" y="5" width="5" height="5" fill="rgb(191, 189, 188)"/><rect x="100" y="5" width="5" height="5" fill="rgb(225, 222, 217)"/><rect x="105" y="5" width="5" height="5" fill="rgb(237,237,241)"/><rect x="0" y="10" width="5" height="5" fill="rgb(178, 178, 178)"/><rect x="5" y="10" width="5" height="5" fill="rgb(227, 224, 219)"/><rect x="10" y="10" width="5" height="5" fill="rgb(200, 200, 200)"/><rect x="15" y="10" width="5" height="5" fill="rgb(222, 219, 214)"/><rect x="20" y="10" width="5" height="5" fill="rgb(228, 225, 220)"/><rect x="25" y="10" width="5" height="5" fill="rgb(195, 193, 192)"/><rect x="30" y="10" width="5" height="5" fill="rgb(195, 199, 207)"/><rect x="35" y="10" width="5" height="5" fill="rgb(218, 218, 218)"/><rect x="40" y="10" width="5" height="5" fill="rgb(217, 214, 209)"/><rect x="45" y="10" width="5" height="5" fill="rgb(222, 220, 219)"/><rect x="50" y="10" width="5" height="5" fill="rgb(198, 195, 190)"/><rect x="55" y="10" width="5" height="5" fill="rgb(190, 188, 187)"/><rect x="60" y="10" width="5" height="5" fill="rgb(209, 213, 221)"/><rect x="65" y="10" width="5" height="5" fill="rgb(203, 200, 195)"/><rect x="70" y="10" width="5" height="5" fill="rgb(200, 200, 200)"/><rect x="75" y="10" width="5" height="5" fill="rgb(217, 221, 229)"/><rect x="80" y="10" width="5" height="5" fill="rgb(198, 195, 190)"/><rect x="85" y="10" width="5" height="5" fill="rgb(207, 211, 219)"/><rect x="90" y="10" width="5" height="5" fill="rgb(193, 191, 190)"/><rect x="95" y="10" width="5" height="5" fill="rgb(204, 202, 201)"/><rect x="100" y="10" width="5" height="5" fill="rgb(209, 209, 209)"/><rect x="105" y="10" width="5" height="5" fill="rgb(245,245,249)"/></svg>
<div class="t" style="left:731px;top:863.01px;font-size:14.2px;color:#333;font-weight:400;letter-spacing:0px;">French</div>
<svg class="r" style="left:858px;top:860px" width="18" height="18" viewBox="0 0 18 18"><circle cx="9.2" cy="9" r="7.4" fill="none" stroke="#fca566" stroke-width="1.1"/><path d="M5.3 8.8 L8.1 11.8 L13.1 6.7" fill="none" stroke="#fb9d57" stroke-width="1.7"/></svg>
<div class="t" style="left:884px;top:863.01px;font-size:14.6px;color:#333;font-weight:400;letter-spacing:0px;">Implied</div>
<div class="t" style="left:1003.6px;top:863.01px;font-size:14.2px;color:#333;font-weight:400;letter-spacing:0px;">2023-03-02 14:43</div>
<svg class="r" style="left:1216px;top:868px" width="24" height="6" viewBox="0 0 24 6"><circle cx="3.1" cy="3" r="1.95" fill="#3e3ac6"/><circle cx="11.5" cy="3" r="1.95" fill="#3e3ac6"/><circle cx="19.9" cy="3" r="1.95" fill="#3e3ac6"/></svg>
</body></html>
